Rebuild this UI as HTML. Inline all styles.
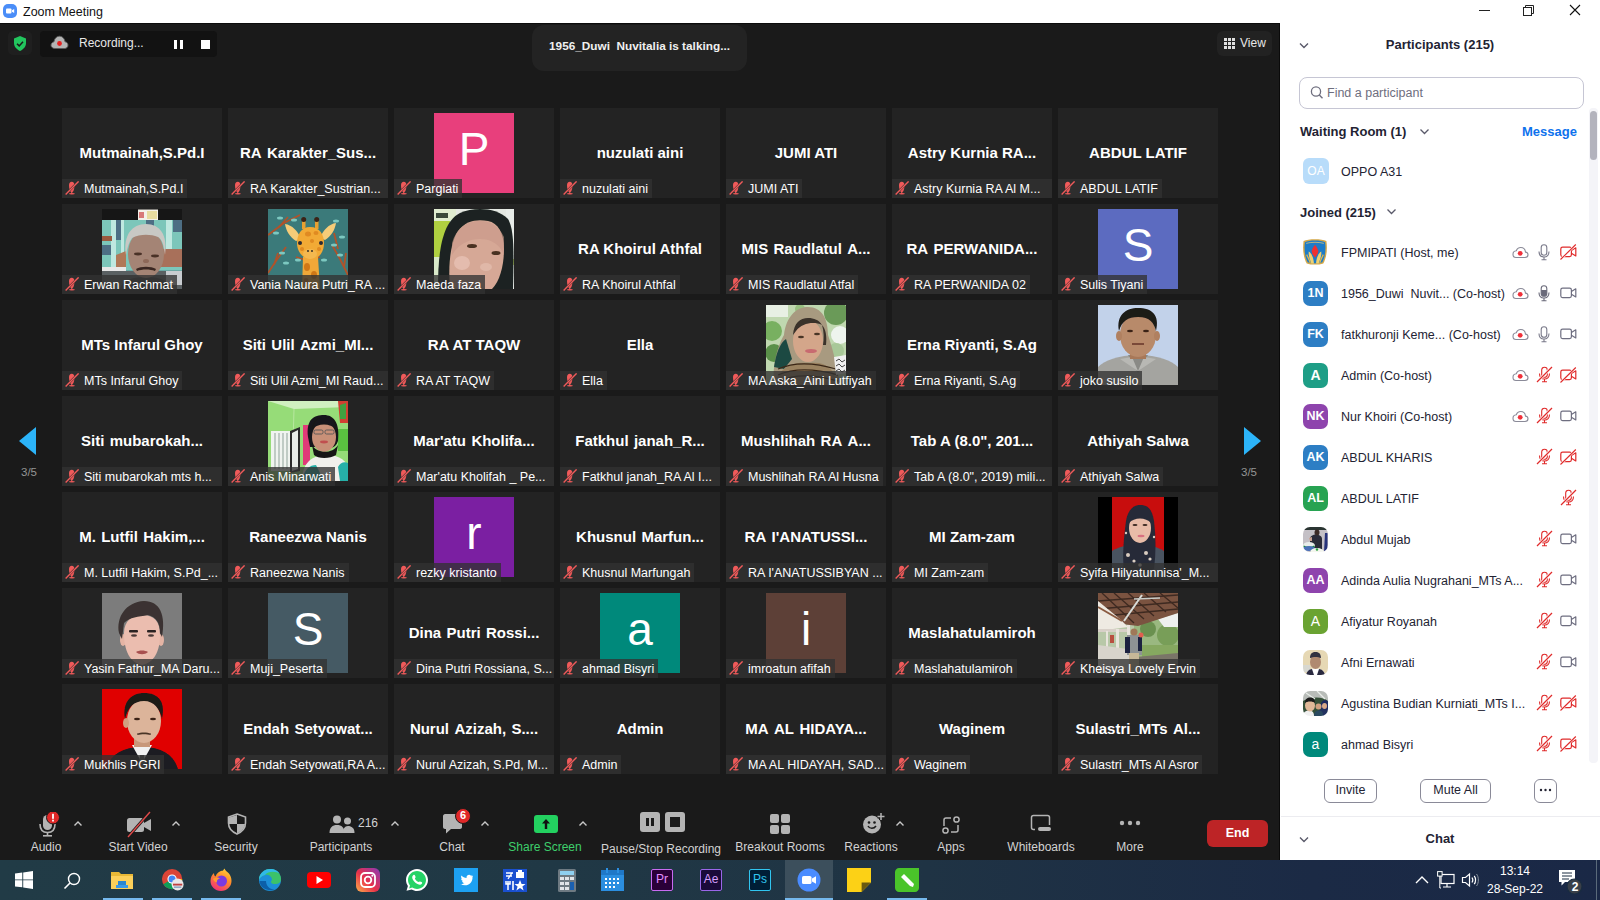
<!DOCTYPE html><html><head><meta charset="utf-8"><style>
*{margin:0;padding:0;box-sizing:border-box}
html,body{width:1600px;height:900px;overflow:hidden;background:#1a1a1a;font-family:"Liberation Sans",sans-serif}
.a{position:absolute}
.t{position:absolute;white-space:nowrap;line-height:1}
.tile{position:absolute;width:160px;height:90px;background:#232323;overflow:hidden}
.big{position:absolute;left:0;width:160px;top:37px;text-align:center;color:#fff;font-weight:bold;font-size:15px;line-height:16px;white-space:nowrap}
.lab{position:absolute;left:0;top:71px;height:19px;background:rgba(50,50,50,0.78);color:#fff;font-size:12.5px;line-height:20px;white-space:nowrap;padding-left:22px;padding-right:4px;max-width:160px;overflow:hidden}
.lab svg{position:absolute;left:3px;top:2px}
.av{position:absolute;left:40px;top:5px;width:80px;height:80px;overflow:hidden;color:#fff;text-align:center;font-size:46px;line-height:73px}
.tb{position:absolute;color:#d2d2d2;font-size:12px;line-height:1;white-space:nowrap;text-align:center}
.prow{position:absolute;left:1280px;width:310px;height:41px}
.pav{position:absolute;left:23px;top:8px;width:25px;height:25px;border-radius:7px;color:#fff;font-weight:bold;font-size:12px;line-height:25px;text-align:center;overflow:hidden}
.pname{position:absolute;left:61px;top:14px;font-size:12.5px;line-height:15px;color:#232333;white-space:nowrap}
.pic{position:absolute;top:11px}
.tk{position:absolute;top:868px;width:24px;height:24px}
</style></head><body>
<div class="a" style="left:0;top:0;width:1600px;height:23px;background:#fff"></div><div class="a" style="left:3px;top:4px;width:14px;height:14px;border-radius:5px;background:#4a8df8"></div><svg class="a" style="left:3px;top:4px" width="14" height="14" viewBox="0 0 14 14"><rect x="3" y="4.5" width="5.5" height="5" rx="1" fill="#fff"/><path d="M9 6.2 L11.2 5 V9 L9 7.8Z" fill="#fff"/></svg><div class="t" style="left:23px;top:6px;font-size:12.5px;color:#111">Zoom Meeting</div><div class="a" style="left:1479px;top:10px;width:11px;height:1px;background:#222"></div><svg class="a" style="left:1522px;top:4px" width="13" height="13" viewBox="0 0 13 13"><rect x="1.5" y="3.5" width="8" height="8" fill="none" stroke="#222"/><path d="M3.5 3.5 V1.5 H11.5 V9.5 H9.5" fill="none" stroke="#222"/></svg><svg class="a" style="left:1569px;top:4px" width="12" height="12" viewBox="0 0 12 12"><path d="M1 1 L11 11 M11 1 L1 11" stroke="#111" stroke-width="1.1"/></svg><div class="a" style="left:8px;top:31px;width:24px;height:24px;border-radius:5px;background:#1f1f1f"></div><svg class="a" style="left:12px;top:35px" width="16" height="17" viewBox="0 0 16 17"><path d="M8 1 L14 3.5 V8 C14 12 11 14.5 8 16 C5 14.5 2 12 2 8 V3.5Z" fill="#22c55e"/><path d="M5 8.7 L7.2 10.9 L11 6.7" fill="none" stroke="#1a1a1a" stroke-width="1.5"/></svg><div class="a" style="left:40px;top:31px;width:177px;height:26px;border-radius:4px;background:#121212"></div><svg class="a" style="left:50px;top:35px" width="19" height="15" viewBox="0 0 19 15"><path d="M5 13.5 H14.5 C16.7 13.5 18 12.1 18 10.1 C18 8.3 16.7 7 15 6.8 C14.7 3.7 12.5 1.2 9.5 1.2 C6.5 1.2 4.3 3.7 4 6.8 C2.3 7.1 1 8.5 1 10.3 C1 12.1 2.7 13.5 5 13.5Z" fill="#b4b4b4" stroke="#5a5a5a" stroke-width="0.9"/><circle cx="9.5" cy="8.5" r="2.4" fill="#e82020"/></svg><div class="t" style="left:79px;top:37px;font-size:12px;color:#e8e8e8">Recording...</div><div class="a" style="left:174px;top:40px;width:3px;height:9px;background:#fff"></div><div class="a" style="left:180px;top:40px;width:3px;height:9px;background:#fff"></div><div class="a" style="left:201px;top:40px;width:9px;height:9px;background:#fff"></div><div class="a" style="left:532px;top:25px;width:215px;height:46px;border-radius:12px;background:#232323"></div><div class="t" style="left:532px;width:215px;top:41px;text-align:center;font-size:11.8px;font-weight:bold;color:#f0f0f0">1956_Duwi&nbsp; Nuvitalia is talking...</div><div class="a" style="left:1217px;top:31px;width:55px;height:25px;border-radius:6px;background:#222"></div><svg class="a" style="left:1224px;top:38px" width="11" height="11" viewBox="0 0 11 11" fill="#e0e0e0"><rect x="0" y="0" width="3" height="3"/><rect x="4" y="0" width="3" height="3"/><rect x="8" y="0" width="3" height="3"/><rect x="0" y="4" width="3" height="3"/><rect x="4" y="4" width="3" height="3"/><rect x="8" y="4" width="3" height="3"/><rect x="0" y="8" width="3" height="3"/><rect x="4" y="8" width="3" height="3"/><rect x="8" y="8" width="3" height="3"/></svg><div class="t" style="left:1240px;top:37px;font-size:12px;color:#e8e8e8">View</div><svg class="a" style="left:18px;top:426px" width="20" height="30" viewBox="0 0 20 30"><path d="M18 1 V29 L1 15Z" fill="#2cb4f9"/></svg><div class="t" style="left:21px;top:467px;font-size:11.5px;color:#959595">3/5</div><svg class="a" style="left:1242px;top:426px" width="20" height="30" viewBox="0 0 20 30"><path d="M2 1 V29 L19 15Z" fill="#2cb4f9"/></svg><div class="t" style="left:1241px;top:467px;font-size:11.5px;color:#959595">3/5</div><div class="tile" style="left:62px;top:108px"><div class="big">Mutmainah,S.Pd.I</div><div class="lab"><svg width="14" height="14" viewBox="0 0 14 14"><path d="M6.75 0.8 C8.4 0.8 9.5 2.2 9.5 4.2 C9.5 6 9.2 7.4 8.9 8.6 C8.6 10.2 7.9 11.2 6.75 11.2 C5.6 11.2 4.9 10.2 4.6 8.6 C4.3 7.4 4 6 4 4.2 C4 2.2 5.1 0.8 6.75 0.8Z" fill="#f05a5a"/><rect x="6.2" y="11" width="1.1" height="1.3" fill="#f05a5a"/><ellipse cx="6.9" cy="12.7" rx="3" ry="0.8" fill="#f05a5a"/><path d="M0.6 13.4 L13.6 0.4" stroke="#2e2e2e" stroke-width="2.2"/><path d="M0.6 13.4 L13.6 0.4" stroke="#f05a5a" stroke-width="1.4"/></svg>Mutmainah,S.Pd.I</div></div><div class="tile" style="left:228px;top:108px"><div class="big">RA<span style="word-spacing:-1.5px">&nbsp; </span>Karakter_Sus...</div><div class="lab" style="width:160px"><svg width="14" height="14" viewBox="0 0 14 14"><path d="M6.75 0.8 C8.4 0.8 9.5 2.2 9.5 4.2 C9.5 6 9.2 7.4 8.9 8.6 C8.6 10.2 7.9 11.2 6.75 11.2 C5.6 11.2 4.9 10.2 4.6 8.6 C4.3 7.4 4 6 4 4.2 C4 2.2 5.1 0.8 6.75 0.8Z" fill="#f05a5a"/><rect x="6.2" y="11" width="1.1" height="1.3" fill="#f05a5a"/><ellipse cx="6.9" cy="12.7" rx="3" ry="0.8" fill="#f05a5a"/><path d="M0.6 13.4 L13.6 0.4" stroke="#2e2e2e" stroke-width="2.2"/><path d="M0.6 13.4 L13.6 0.4" stroke="#f05a5a" stroke-width="1.4"/></svg>RA Karakter_Sustrian...</div></div><div class="tile" style="left:394px;top:108px"><div class="av" style="background:#e83f7c">P</div><div class="lab"><svg width="14" height="14" viewBox="0 0 14 14"><path d="M6.75 0.8 C8.4 0.8 9.5 2.2 9.5 4.2 C9.5 6 9.2 7.4 8.9 8.6 C8.6 10.2 7.9 11.2 6.75 11.2 C5.6 11.2 4.9 10.2 4.6 8.6 C4.3 7.4 4 6 4 4.2 C4 2.2 5.1 0.8 6.75 0.8Z" fill="#f05a5a"/><rect x="6.2" y="11" width="1.1" height="1.3" fill="#f05a5a"/><ellipse cx="6.9" cy="12.7" rx="3" ry="0.8" fill="#f05a5a"/><path d="M0.6 13.4 L13.6 0.4" stroke="#2e2e2e" stroke-width="2.2"/><path d="M0.6 13.4 L13.6 0.4" stroke="#f05a5a" stroke-width="1.4"/></svg>Pargiati</div></div><div class="tile" style="left:560px;top:108px"><div class="big">nuzulati aini</div><div class="lab"><svg width="14" height="14" viewBox="0 0 14 14"><path d="M6.75 0.8 C8.4 0.8 9.5 2.2 9.5 4.2 C9.5 6 9.2 7.4 8.9 8.6 C8.6 10.2 7.9 11.2 6.75 11.2 C5.6 11.2 4.9 10.2 4.6 8.6 C4.3 7.4 4 6 4 4.2 C4 2.2 5.1 0.8 6.75 0.8Z" fill="#f05a5a"/><rect x="6.2" y="11" width="1.1" height="1.3" fill="#f05a5a"/><ellipse cx="6.9" cy="12.7" rx="3" ry="0.8" fill="#f05a5a"/><path d="M0.6 13.4 L13.6 0.4" stroke="#2e2e2e" stroke-width="2.2"/><path d="M0.6 13.4 L13.6 0.4" stroke="#f05a5a" stroke-width="1.4"/></svg>nuzulati aini</div></div><div class="tile" style="left:726px;top:108px"><div class="big">JUMI ATI</div><div class="lab"><svg width="14" height="14" viewBox="0 0 14 14"><path d="M6.75 0.8 C8.4 0.8 9.5 2.2 9.5 4.2 C9.5 6 9.2 7.4 8.9 8.6 C8.6 10.2 7.9 11.2 6.75 11.2 C5.6 11.2 4.9 10.2 4.6 8.6 C4.3 7.4 4 6 4 4.2 C4 2.2 5.1 0.8 6.75 0.8Z" fill="#f05a5a"/><rect x="6.2" y="11" width="1.1" height="1.3" fill="#f05a5a"/><ellipse cx="6.9" cy="12.7" rx="3" ry="0.8" fill="#f05a5a"/><path d="M0.6 13.4 L13.6 0.4" stroke="#2e2e2e" stroke-width="2.2"/><path d="M0.6 13.4 L13.6 0.4" stroke="#f05a5a" stroke-width="1.4"/></svg>JUMI ATI</div></div><div class="tile" style="left:892px;top:108px"><div class="big">Astry Kurnia RA...</div><div class="lab" style="width:160px"><svg width="14" height="14" viewBox="0 0 14 14"><path d="M6.75 0.8 C8.4 0.8 9.5 2.2 9.5 4.2 C9.5 6 9.2 7.4 8.9 8.6 C8.6 10.2 7.9 11.2 6.75 11.2 C5.6 11.2 4.9 10.2 4.6 8.6 C4.3 7.4 4 6 4 4.2 C4 2.2 5.1 0.8 6.75 0.8Z" fill="#f05a5a"/><rect x="6.2" y="11" width="1.1" height="1.3" fill="#f05a5a"/><ellipse cx="6.9" cy="12.7" rx="3" ry="0.8" fill="#f05a5a"/><path d="M0.6 13.4 L13.6 0.4" stroke="#2e2e2e" stroke-width="2.2"/><path d="M0.6 13.4 L13.6 0.4" stroke="#f05a5a" stroke-width="1.4"/></svg>Astry Kurnia RA Al M...</div></div><div class="tile" style="left:1058px;top:108px"><div class="big">ABDUL LATIF</div><div class="lab"><svg width="14" height="14" viewBox="0 0 14 14"><path d="M6.75 0.8 C8.4 0.8 9.5 2.2 9.5 4.2 C9.5 6 9.2 7.4 8.9 8.6 C8.6 10.2 7.9 11.2 6.75 11.2 C5.6 11.2 4.9 10.2 4.6 8.6 C4.3 7.4 4 6 4 4.2 C4 2.2 5.1 0.8 6.75 0.8Z" fill="#f05a5a"/><rect x="6.2" y="11" width="1.1" height="1.3" fill="#f05a5a"/><ellipse cx="6.9" cy="12.7" rx="3" ry="0.8" fill="#f05a5a"/><path d="M0.6 13.4 L13.6 0.4" stroke="#2e2e2e" stroke-width="2.2"/><path d="M0.6 13.4 L13.6 0.4" stroke="#f05a5a" stroke-width="1.4"/></svg>ABDUL LATIF</div></div><div class="tile" style="left:62px;top:204px"><div class="av"><svg width="80" height="80" viewBox="0 0 80 80"><defs><filter id="berwan" x="0" y="0" width="1" height="1"><feGaussianBlur stdDeviation="0.7"/></filter></defs><g filter="url(#berwan)"><rect width="80" height="80" fill="#6aa8a4"/>
<rect x="0" y="11" width="80" height="50" fill="#7cc6ba"/>
<g fill="#bfe8e0"><rect x="9" y="11" width="5" height="52"/><rect x="19" y="11" width="3" height="52"/><rect x="64" y="11" width="6" height="30"/></g>
<g fill="#4e6e84"><rect x="14" y="11" width="5" height="20"/><rect x="44" y="11" width="8" height="12"/><rect x="71" y="11" width="9" height="12"/><rect x="0" y="36" width="9" height="10"/></g>
<rect x="0" y="27" width="10" height="5" fill="#9a5a40"/><path d="M58 40 H80 V58 H58Z" fill="#a8705a"/><path d="M14 46 L24 42 V58 H14Z" fill="#b07858"/><rect x="0" y="58" width="24" height="5" fill="#e8e8e8"/>
<rect x="0" y="62" width="80" height="18" fill="#5a6062"/><rect x="64" y="62" width="16" height="14" fill="#c8ccd0"/>
<rect width="80" height="11" fill="#121212"/><rect x="36" y="0.5" width="20" height="10.5" fill="#f4f0e8"/><rect x="45" y="2" width="10" height="8" fill="#e8dca0"/><rect x="37" y="3" width="5" height="6" fill="#d87878"/>
<path d="M18 80 C20 72 28 68 44 68 C60 68 66 72 68 80Z" fill="#3a3c3c"/>
<ellipse cx="44" cy="45" rx="18" ry="24" fill="#a48474"/>
<path d="M24 46 C21 26 30 15 44 15 C58 15 66 26 63 46 C62 36 60 30 56 28 C48 25 38 25 30 29 C27 33 25 39 24 46Z" fill="#c8c8c4"/>
<ellipse cx="36" cy="45" rx="4" ry="1.4" fill="#4a3028"/><ellipse cx="53" cy="47" rx="4" ry="1.4" fill="#4a3028"/><ellipse cx="44" cy="52" rx="3" ry="2" fill="#8e6858"/>
<path d="M34 60 C39 57 49 57 54 60 L53 62 C48 60 40 60 35 62Z" fill="#3a2820"/></g></svg></div><div class="lab"><svg width="14" height="14" viewBox="0 0 14 14"><path d="M6.75 0.8 C8.4 0.8 9.5 2.2 9.5 4.2 C9.5 6 9.2 7.4 8.9 8.6 C8.6 10.2 7.9 11.2 6.75 11.2 C5.6 11.2 4.9 10.2 4.6 8.6 C4.3 7.4 4 6 4 4.2 C4 2.2 5.1 0.8 6.75 0.8Z" fill="#f05a5a"/><rect x="6.2" y="11" width="1.1" height="1.3" fill="#f05a5a"/><ellipse cx="6.9" cy="12.7" rx="3" ry="0.8" fill="#f05a5a"/><path d="M0.6 13.4 L13.6 0.4" stroke="#2e2e2e" stroke-width="2.2"/><path d="M0.6 13.4 L13.6 0.4" stroke="#f05a5a" stroke-width="1.4"/></svg>Erwan Rachmat</div></div><div class="tile" style="left:228px;top:204px"><div class="av"><svg width="80" height="80" viewBox="0 0 80 80"><defs><filter id="bgiraffe" x="0" y="0" width="1" height="1"><feGaussianBlur stdDeviation="0.7"/></filter></defs><g filter="url(#bgiraffe)"><rect width="80" height="80" fill="#3b7a7a"/>
<g stroke="#b0522a" stroke-width="1.8" fill="none"><path d="M0 26 L16 14 L32 6"/><path d="M10 19 L20 8"/><path d="M0 64 L8 52 L18 38"/><path d="M6 56 L10 44"/><path d="M80 66 L72 50 L64 36"/><path d="M76 58 L78 44"/><path d="M70 40 L66 24"/><path d="M28 48 L40 52 L52 48"/></g>
<g fill="#7cc8c0"><ellipse cx="12" cy="9" rx="3" ry="1.5"/><ellipse cx="26" cy="11" rx="3" ry="1.5"/><ellipse cx="8" cy="24" rx="3" ry="1.5"/><ellipse cx="14" cy="44" rx="3" ry="1.5"/><ellipse cx="18" cy="54" rx="3" ry="1.5"/><ellipse cx="68" cy="12" rx="3" ry="1.5"/><ellipse cx="74" cy="28" rx="3" ry="1.5"/><ellipse cx="66" cy="36" rx="3" ry="1.5"/><ellipse cx="72" cy="46" rx="3" ry="1.5"/><ellipse cx="30" cy="51" rx="3" ry="1.5"/><ellipse cx="56" cy="51" rx="3" ry="1.5"/></g>
<path d="M35 48 H50 L52 80 H34Z" fill="#f0a838"/><g fill="#d07818"><ellipse cx="39" cy="58" rx="3" ry="4"/><ellipse cx="46" cy="66" rx="3" ry="4"/><ellipse cx="38" cy="72" rx="2.5" ry="3"/></g>
<path d="M17 15 C24 16 30 22 33 30 L28 32 C22 28 18 22 17 15Z" fill="#f6cc78"/><path d="M68 14 C61 15 55 21 52 29 L57 31 C63 27 67 21 68 14Z" fill="#f6cc78"/>
<rect x="34" y="10" width="3.5" height="10" fill="#e8a030"/><rect x="47" y="10" width="3.5" height="10" fill="#e8a030"/><circle cx="35.7" cy="10.5" r="2.5" fill="#3a2418"/><circle cx="48.7" cy="10.5" r="2.5" fill="#3a2418"/>
<path d="M42 18 C52 18 56 26 56 34 C56 42 52 50 43 50 C34 50 29 42 29 34 C29 26 33 18 42 18Z" fill="#f2aa36"/>
<g fill="#e08a20"><ellipse cx="40" cy="25" rx="3" ry="2.5"/><ellipse cx="48" cy="24" rx="2.5" ry="2"/><ellipse cx="44" cy="32" rx="2" ry="2"/><ellipse cx="34" cy="40" rx="2" ry="2"/><ellipse cx="51" cy="40" rx="2" ry="2"/></g>
<ellipse cx="42" cy="45" rx="7" ry="5" fill="#f4b850"/>
<circle cx="32" cy="34" r="2" fill="#2a2a30"/><circle cx="53" cy="34" r="2" fill="#2a2a30"/><circle cx="40" cy="42" r="0.9" fill="#222"/><circle cx="44" cy="42" r="0.9" fill="#222"/></g></svg></div><div class="lab" style="width:160px"><svg width="14" height="14" viewBox="0 0 14 14"><path d="M6.75 0.8 C8.4 0.8 9.5 2.2 9.5 4.2 C9.5 6 9.2 7.4 8.9 8.6 C8.6 10.2 7.9 11.2 6.75 11.2 C5.6 11.2 4.9 10.2 4.6 8.6 C4.3 7.4 4 6 4 4.2 C4 2.2 5.1 0.8 6.75 0.8Z" fill="#f05a5a"/><rect x="6.2" y="11" width="1.1" height="1.3" fill="#f05a5a"/><ellipse cx="6.9" cy="12.7" rx="3" ry="0.8" fill="#f05a5a"/><path d="M0.6 13.4 L13.6 0.4" stroke="#2e2e2e" stroke-width="2.2"/><path d="M0.6 13.4 L13.6 0.4" stroke="#f05a5a" stroke-width="1.4"/></svg>Vania Naura Putri_RA ...</div></div><div class="tile" style="left:394px;top:204px"><div class="av"><svg width="80" height="80" viewBox="0 0 80 80"><defs><filter id="bmaeda" x="0" y="0" width="1" height="1"><feGaussianBlur stdDeviation="0.7"/></filter></defs><g filter="url(#bmaeda)"><rect width="80" height="80" fill="#e4e8e2"/><rect x="0" y="0" width="16" height="80" fill="#b0d040"/><rect x="0" y="0" width="22" height="12" fill="#e0ecd0"/><rect x="2" y="4" width="12" height="5" fill="#3a4a3a"/><rect x="0" y="48" width="10" height="32" fill="#d8e8c8"/><rect x="72" y="0" width="8" height="80" fill="#e8ece8"/><rect x="72" y="50" width="8" height="6" fill="#b8d060"/>
<path d="M4 80 C4 50 6 14 26 4 C40 -2 62 -2 74 10 C80 20 80 40 79 80Z" fill="#1a2420"/>
<path d="M16 80 C14 58 16 34 24 22 C32 11 44 10 54 12 C64 14 70 24 70 40 C70 56 66 72 58 80Z" fill="#d6a896"/>
<path d="M18 46 C24 36 34 30 46 30 C58 30 66 36 70 46 L70 28 C64 16 56 12 46 12 C32 12 22 20 18 34Z" fill="#c89888" opacity="0.6"/>
<ellipse cx="38" cy="37" rx="5" ry="2" fill="#4a3020"/><ellipse cx="62" cy="44" rx="4.5" ry="2" fill="#4a3020"/><ellipse cx="52" cy="58" rx="6" ry="4" fill="#e0b8a8"/><ellipse cx="28" cy="54" rx="8" ry="7" fill="#e4bcae"/></g></svg></div><div class="lab"><svg width="14" height="14" viewBox="0 0 14 14"><path d="M6.75 0.8 C8.4 0.8 9.5 2.2 9.5 4.2 C9.5 6 9.2 7.4 8.9 8.6 C8.6 10.2 7.9 11.2 6.75 11.2 C5.6 11.2 4.9 10.2 4.6 8.6 C4.3 7.4 4 6 4 4.2 C4 2.2 5.1 0.8 6.75 0.8Z" fill="#f05a5a"/><rect x="6.2" y="11" width="1.1" height="1.3" fill="#f05a5a"/><ellipse cx="6.9" cy="12.7" rx="3" ry="0.8" fill="#f05a5a"/><path d="M0.6 13.4 L13.6 0.4" stroke="#2e2e2e" stroke-width="2.2"/><path d="M0.6 13.4 L13.6 0.4" stroke="#f05a5a" stroke-width="1.4"/></svg>Maeda faza</div></div><div class="tile" style="left:560px;top:204px"><div class="big">RA Khoirul Athfal</div><div class="lab"><svg width="14" height="14" viewBox="0 0 14 14"><path d="M6.75 0.8 C8.4 0.8 9.5 2.2 9.5 4.2 C9.5 6 9.2 7.4 8.9 8.6 C8.6 10.2 7.9 11.2 6.75 11.2 C5.6 11.2 4.9 10.2 4.6 8.6 C4.3 7.4 4 6 4 4.2 C4 2.2 5.1 0.8 6.75 0.8Z" fill="#f05a5a"/><rect x="6.2" y="11" width="1.1" height="1.3" fill="#f05a5a"/><ellipse cx="6.9" cy="12.7" rx="3" ry="0.8" fill="#f05a5a"/><path d="M0.6 13.4 L13.6 0.4" stroke="#2e2e2e" stroke-width="2.2"/><path d="M0.6 13.4 L13.6 0.4" stroke="#f05a5a" stroke-width="1.4"/></svg>RA Khoirul Athfal</div></div><div class="tile" style="left:726px;top:204px"><div class="big">MIS<span style="word-spacing:-1.5px">&nbsp; </span>Raudlatul<span style="word-spacing:-1.5px">&nbsp; </span>A...</div><div class="lab"><svg width="14" height="14" viewBox="0 0 14 14"><path d="M6.75 0.8 C8.4 0.8 9.5 2.2 9.5 4.2 C9.5 6 9.2 7.4 8.9 8.6 C8.6 10.2 7.9 11.2 6.75 11.2 C5.6 11.2 4.9 10.2 4.6 8.6 C4.3 7.4 4 6 4 4.2 C4 2.2 5.1 0.8 6.75 0.8Z" fill="#f05a5a"/><rect x="6.2" y="11" width="1.1" height="1.3" fill="#f05a5a"/><ellipse cx="6.9" cy="12.7" rx="3" ry="0.8" fill="#f05a5a"/><path d="M0.6 13.4 L13.6 0.4" stroke="#2e2e2e" stroke-width="2.2"/><path d="M0.6 13.4 L13.6 0.4" stroke="#f05a5a" stroke-width="1.4"/></svg>MIS Raudlatul Atfal</div></div><div class="tile" style="left:892px;top:204px"><div class="big">RA<span style="word-spacing:-1.5px">&nbsp; </span>PERWANIDA...</div><div class="lab"><svg width="14" height="14" viewBox="0 0 14 14"><path d="M6.75 0.8 C8.4 0.8 9.5 2.2 9.5 4.2 C9.5 6 9.2 7.4 8.9 8.6 C8.6 10.2 7.9 11.2 6.75 11.2 C5.6 11.2 4.9 10.2 4.6 8.6 C4.3 7.4 4 6 4 4.2 C4 2.2 5.1 0.8 6.75 0.8Z" fill="#f05a5a"/><rect x="6.2" y="11" width="1.1" height="1.3" fill="#f05a5a"/><ellipse cx="6.9" cy="12.7" rx="3" ry="0.8" fill="#f05a5a"/><path d="M0.6 13.4 L13.6 0.4" stroke="#2e2e2e" stroke-width="2.2"/><path d="M0.6 13.4 L13.6 0.4" stroke="#f05a5a" stroke-width="1.4"/></svg>RA PERWANIDA 02</div></div><div class="tile" style="left:1058px;top:204px"><div class="av" style="background:#5c6bc0">S</div><div class="lab"><svg width="14" height="14" viewBox="0 0 14 14"><path d="M6.75 0.8 C8.4 0.8 9.5 2.2 9.5 4.2 C9.5 6 9.2 7.4 8.9 8.6 C8.6 10.2 7.9 11.2 6.75 11.2 C5.6 11.2 4.9 10.2 4.6 8.6 C4.3 7.4 4 6 4 4.2 C4 2.2 5.1 0.8 6.75 0.8Z" fill="#f05a5a"/><rect x="6.2" y="11" width="1.1" height="1.3" fill="#f05a5a"/><ellipse cx="6.9" cy="12.7" rx="3" ry="0.8" fill="#f05a5a"/><path d="M0.6 13.4 L13.6 0.4" stroke="#2e2e2e" stroke-width="2.2"/><path d="M0.6 13.4 L13.6 0.4" stroke="#f05a5a" stroke-width="1.4"/></svg>Sulis Tiyani</div></div><div class="tile" style="left:62px;top:300px"><div class="big">MTs Infarul Ghoy</div><div class="lab"><svg width="14" height="14" viewBox="0 0 14 14"><path d="M6.75 0.8 C8.4 0.8 9.5 2.2 9.5 4.2 C9.5 6 9.2 7.4 8.9 8.6 C8.6 10.2 7.9 11.2 6.75 11.2 C5.6 11.2 4.9 10.2 4.6 8.6 C4.3 7.4 4 6 4 4.2 C4 2.2 5.1 0.8 6.75 0.8Z" fill="#f05a5a"/><rect x="6.2" y="11" width="1.1" height="1.3" fill="#f05a5a"/><ellipse cx="6.9" cy="12.7" rx="3" ry="0.8" fill="#f05a5a"/><path d="M0.6 13.4 L13.6 0.4" stroke="#2e2e2e" stroke-width="2.2"/><path d="M0.6 13.4 L13.6 0.4" stroke="#f05a5a" stroke-width="1.4"/></svg>MTs Infarul Ghoy</div></div><div class="tile" style="left:228px;top:300px"><div class="big">Siti<span style="word-spacing:-1.5px">&nbsp; </span>Ulil<span style="word-spacing:-1.5px">&nbsp; </span>Azmi_MI...</div><div class="lab" style="width:160px"><svg width="14" height="14" viewBox="0 0 14 14"><path d="M6.75 0.8 C8.4 0.8 9.5 2.2 9.5 4.2 C9.5 6 9.2 7.4 8.9 8.6 C8.6 10.2 7.9 11.2 6.75 11.2 C5.6 11.2 4.9 10.2 4.6 8.6 C4.3 7.4 4 6 4 4.2 C4 2.2 5.1 0.8 6.75 0.8Z" fill="#f05a5a"/><rect x="6.2" y="11" width="1.1" height="1.3" fill="#f05a5a"/><ellipse cx="6.9" cy="12.7" rx="3" ry="0.8" fill="#f05a5a"/><path d="M0.6 13.4 L13.6 0.4" stroke="#2e2e2e" stroke-width="2.2"/><path d="M0.6 13.4 L13.6 0.4" stroke="#f05a5a" stroke-width="1.4"/></svg>Siti Ulil Azmi_MI Raud...</div></div><div class="tile" style="left:394px;top:300px"><div class="big">RA AT TAQW</div><div class="lab"><svg width="14" height="14" viewBox="0 0 14 14"><path d="M6.75 0.8 C8.4 0.8 9.5 2.2 9.5 4.2 C9.5 6 9.2 7.4 8.9 8.6 C8.6 10.2 7.9 11.2 6.75 11.2 C5.6 11.2 4.9 10.2 4.6 8.6 C4.3 7.4 4 6 4 4.2 C4 2.2 5.1 0.8 6.75 0.8Z" fill="#f05a5a"/><rect x="6.2" y="11" width="1.1" height="1.3" fill="#f05a5a"/><ellipse cx="6.9" cy="12.7" rx="3" ry="0.8" fill="#f05a5a"/><path d="M0.6 13.4 L13.6 0.4" stroke="#2e2e2e" stroke-width="2.2"/><path d="M0.6 13.4 L13.6 0.4" stroke="#f05a5a" stroke-width="1.4"/></svg>RA AT TAQW</div></div><div class="tile" style="left:560px;top:300px"><div class="big">Ella</div><div class="lab"><svg width="14" height="14" viewBox="0 0 14 14"><path d="M6.75 0.8 C8.4 0.8 9.5 2.2 9.5 4.2 C9.5 6 9.2 7.4 8.9 8.6 C8.6 10.2 7.9 11.2 6.75 11.2 C5.6 11.2 4.9 10.2 4.6 8.6 C4.3 7.4 4 6 4 4.2 C4 2.2 5.1 0.8 6.75 0.8Z" fill="#f05a5a"/><rect x="6.2" y="11" width="1.1" height="1.3" fill="#f05a5a"/><ellipse cx="6.9" cy="12.7" rx="3" ry="0.8" fill="#f05a5a"/><path d="M0.6 13.4 L13.6 0.4" stroke="#2e2e2e" stroke-width="2.2"/><path d="M0.6 13.4 L13.6 0.4" stroke="#f05a5a" stroke-width="1.4"/></svg>Ella</div></div><div class="tile" style="left:726px;top:300px"><div class="av"><svg width="80" height="80" viewBox="0 0 80 80"><defs><filter id="baska" x="0" y="0" width="1" height="1"><feGaussianBlur stdDeviation="0.7"/></filter></defs><g filter="url(#baska)"><rect width="80" height="80" fill="#c0d8b0"/><circle cx="6" cy="26" r="10" fill="#78b060"/><circle cx="8" cy="48" r="9" fill="#5a9048"/><circle cx="70" cy="8" r="12" fill="#6a9a58"/><circle cx="74" cy="30" r="9" fill="#eef4ee"/><circle cx="70" cy="46" r="8" fill="#a8c898"/><rect x="0" y="0" width="22" height="12" fill="#e8f0e4"/><circle cx="34" cy="4" r="5" fill="#98c080"/>
<path d="M8 80 C6 60 12 40 18 30 C20 12 30 2 42 2 C56 2 62 14 62 30 C66 42 70 56 74 80Z" fill="#a89a80"/>
<path d="M8 62 C10 48 14 38 20 34 L26 54 L18 64Z" fill="#1e4a42"/>
<ellipse cx="42" cy="36" rx="15" ry="21" fill="#d4a68a"/><path d="M27 30 C28 18 34 13 42 13 C48 13 53 15 56 20 C48 16 36 18 30 26Z" fill="#3a302a"/><path d="M56 20 C58 26 58 34 57 40 L60 40 C61 32 60 24 56 20Z" fill="#3a302a"/>
<ellipse cx="35" cy="32" rx="3" ry="1.2" fill="#4a3428"/><ellipse cx="51" cy="29" rx="3" ry="1.2" fill="#4a3428"/><ellipse cx="45" cy="46" rx="6" ry="2" fill="#c86a70"/>
<path d="M10 80 C12 64 24 56 44 58 C58 56 68 62 72 80Z" fill="#9a8260"/><g stroke="#3a2818" stroke-width="1.3" fill="none"><path d="M12 64 C30 56 50 58 70 64"/><path d="M12 70 C30 62 50 64 72 70"/><path d="M14 76 C30 68 50 70 72 76"/></g>
<path d="M68 52 L80 50 V68 L70 70Z" fill="#f0f0f0"/><path d="M70 56 L73 54 L76 57 L79 55 M70 61 L73 59 L76 62 L79 60 M70 66 L73 64 L76 67 L79 65" stroke="#444" stroke-width="1" fill="none"/></g></svg></div><div class="lab"><svg width="14" height="14" viewBox="0 0 14 14"><path d="M6.75 0.8 C8.4 0.8 9.5 2.2 9.5 4.2 C9.5 6 9.2 7.4 8.9 8.6 C8.6 10.2 7.9 11.2 6.75 11.2 C5.6 11.2 4.9 10.2 4.6 8.6 C4.3 7.4 4 6 4 4.2 C4 2.2 5.1 0.8 6.75 0.8Z" fill="#f05a5a"/><rect x="6.2" y="11" width="1.1" height="1.3" fill="#f05a5a"/><ellipse cx="6.9" cy="12.7" rx="3" ry="0.8" fill="#f05a5a"/><path d="M0.6 13.4 L13.6 0.4" stroke="#2e2e2e" stroke-width="2.2"/><path d="M0.6 13.4 L13.6 0.4" stroke="#f05a5a" stroke-width="1.4"/></svg>MA Aska_Aini Lutfiyah</div></div><div class="tile" style="left:892px;top:300px"><div class="big">Erna Riyanti, S.Ag</div><div class="lab"><svg width="14" height="14" viewBox="0 0 14 14"><path d="M6.75 0.8 C8.4 0.8 9.5 2.2 9.5 4.2 C9.5 6 9.2 7.4 8.9 8.6 C8.6 10.2 7.9 11.2 6.75 11.2 C5.6 11.2 4.9 10.2 4.6 8.6 C4.3 7.4 4 6 4 4.2 C4 2.2 5.1 0.8 6.75 0.8Z" fill="#f05a5a"/><rect x="6.2" y="11" width="1.1" height="1.3" fill="#f05a5a"/><ellipse cx="6.9" cy="12.7" rx="3" ry="0.8" fill="#f05a5a"/><path d="M0.6 13.4 L13.6 0.4" stroke="#2e2e2e" stroke-width="2.2"/><path d="M0.6 13.4 L13.6 0.4" stroke="#f05a5a" stroke-width="1.4"/></svg>Erna Riyanti, S.Ag</div></div><div class="tile" style="left:1058px;top:300px"><div class="av"><svg width="80" height="80" viewBox="0 0 80 80"><defs><filter id="bjoko" x="0" y="0" width="1" height="1"><feGaussianBlur stdDeviation="0.7"/></filter></defs><g filter="url(#bjoko)"><rect width="80" height="80" fill="#c2d2ea"/>
<path d="M0 80 V62 C6 56 20 50 40 50 C60 50 74 56 80 62 V80Z" fill="#a4a4a0"/><path d="M30 50 L40 68 L50 50Z" fill="#8a8a86"/><path d="M22 54 L34 52 L40 66 Z M58 54 L46 52 L40 66Z" fill="#b8b8b4"/>
<rect x="32" y="40" width="16" height="14" fill="#a87858"/>
<ellipse cx="40" cy="30" rx="18" ry="22" fill="#b88a6a"/><ellipse cx="21" cy="31" rx="3" ry="5" fill="#b08060"/><ellipse cx="59" cy="31" rx="3" ry="5" fill="#b08060"/>
<path d="M21 26 C18 10 28 3 40 3 C54 3 62 10 58 26 C56 18 52 12 40 12 C30 12 24 16 21 26Z" fill="#1e1a18"/>
<ellipse cx="32" cy="26" rx="3" ry="1.2" fill="#3a2418"/><ellipse cx="48" cy="26" rx="3" ry="1.2" fill="#3a2418"/><rect x="34" y="38" width="12" height="2" fill="#7a4a38"/></g></svg></div><div class="lab"><svg width="14" height="14" viewBox="0 0 14 14"><path d="M6.75 0.8 C8.4 0.8 9.5 2.2 9.5 4.2 C9.5 6 9.2 7.4 8.9 8.6 C8.6 10.2 7.9 11.2 6.75 11.2 C5.6 11.2 4.9 10.2 4.6 8.6 C4.3 7.4 4 6 4 4.2 C4 2.2 5.1 0.8 6.75 0.8Z" fill="#f05a5a"/><rect x="6.2" y="11" width="1.1" height="1.3" fill="#f05a5a"/><ellipse cx="6.9" cy="12.7" rx="3" ry="0.8" fill="#f05a5a"/><path d="M0.6 13.4 L13.6 0.4" stroke="#2e2e2e" stroke-width="2.2"/><path d="M0.6 13.4 L13.6 0.4" stroke="#f05a5a" stroke-width="1.4"/></svg>joko susilo</div></div><div class="tile" style="left:62px;top:396px"><div class="big">Siti<span style="word-spacing:-1.5px">&nbsp; </span>mubarokah...</div><div class="lab" style="width:160px"><svg width="14" height="14" viewBox="0 0 14 14"><path d="M6.75 0.8 C8.4 0.8 9.5 2.2 9.5 4.2 C9.5 6 9.2 7.4 8.9 8.6 C8.6 10.2 7.9 11.2 6.75 11.2 C5.6 11.2 4.9 10.2 4.6 8.6 C4.3 7.4 4 6 4 4.2 C4 2.2 5.1 0.8 6.75 0.8Z" fill="#f05a5a"/><rect x="6.2" y="11" width="1.1" height="1.3" fill="#f05a5a"/><ellipse cx="6.9" cy="12.7" rx="3" ry="0.8" fill="#f05a5a"/><path d="M0.6 13.4 L13.6 0.4" stroke="#2e2e2e" stroke-width="2.2"/><path d="M0.6 13.4 L13.6 0.4" stroke="#f05a5a" stroke-width="1.4"/></svg>Siti mubarokah mts h...</div></div><div class="tile" style="left:228px;top:396px"><div class="av"><svg width="80" height="80" viewBox="0 0 80 80"><defs><filter id="banis" x="0" y="0" width="1" height="1"><feGaussianBlur stdDeviation="0.7"/></filter></defs><g filter="url(#banis)"><rect width="80" height="80" fill="#96dc78"/><path d="M0 0 H80 V6 L26 8 L0 0Z" fill="#d0f0c0"/><path d="M26 8 L24 80" stroke="#b8e8a0" stroke-width="1"/>
<rect x="3" y="30" width="20" height="40" fill="#f0f4f0"/><g stroke="#a0b0a8" stroke-width="1.2"><path d="M7 32 V68 M11 32 V68 M15 32 V68 M19 32 V68"/></g><path d="M22 30 L32 26 V70 L22 72Z" fill="#2a2a2a"/><path d="M24 32 L30 29 V68 L24 70Z" fill="#e8ece8"/>
<rect x="35" y="24" width="7" height="40" fill="#e03a78"/><path d="M70 0 H80 V22 L72 22Z" fill="#d04030"/><path d="M72 4 L78 2 V18 L72 18Z" fill="#40a040"/><rect x="70" y="28" width="10" height="22" fill="#5ac040"/>
<path d="M34 80 C34 62 44 54 58 54 C72 54 80 60 80 70 V80Z" fill="#f0f0ec"/><path d="M34 80 C36 68 42 64 48 64 L56 80Z M80 62 C76 60 72 62 70 66 L72 80 H80Z" fill="#28b0a8"/>
<path d="M40 36 C38 18 46 14 56 14 C66 14 72 22 70 40 C68 46 64 48 60 46 L42 46Z" fill="#18181a"/>
<ellipse cx="56" cy="36" rx="12" ry="15" fill="#c89078"/><path d="M44 28 C46 18 52 16 57 16 C64 16 68 20 68 28 C62 22 50 22 44 28Z" fill="#18181a"/>
<rect x="46" y="29" width="9" height="4" rx="1.5" fill="none" stroke="#555" stroke-width="0.9"/><rect x="57" y="29" width="9" height="4" rx="1.5" fill="none" stroke="#555" stroke-width="0.9"/><ellipse cx="56" cy="41" rx="4" ry="1.4" fill="#c05050"/>
<path d="M44 44 C48 52 64 54 70 44 L68 54 C62 58 50 58 46 54Z" fill="#141414"/></g></svg></div><div class="lab"><svg width="14" height="14" viewBox="0 0 14 14"><path d="M6.75 0.8 C8.4 0.8 9.5 2.2 9.5 4.2 C9.5 6 9.2 7.4 8.9 8.6 C8.6 10.2 7.9 11.2 6.75 11.2 C5.6 11.2 4.9 10.2 4.6 8.6 C4.3 7.4 4 6 4 4.2 C4 2.2 5.1 0.8 6.75 0.8Z" fill="#f05a5a"/><rect x="6.2" y="11" width="1.1" height="1.3" fill="#f05a5a"/><ellipse cx="6.9" cy="12.7" rx="3" ry="0.8" fill="#f05a5a"/><path d="M0.6 13.4 L13.6 0.4" stroke="#2e2e2e" stroke-width="2.2"/><path d="M0.6 13.4 L13.6 0.4" stroke="#f05a5a" stroke-width="1.4"/></svg>Anis Minarwati</div></div><div class="tile" style="left:394px;top:396px"><div class="big">Mar&#x27;atu<span style="word-spacing:-1.5px">&nbsp; </span>Kholifa...</div><div class="lab" style="width:160px"><svg width="14" height="14" viewBox="0 0 14 14"><path d="M6.75 0.8 C8.4 0.8 9.5 2.2 9.5 4.2 C9.5 6 9.2 7.4 8.9 8.6 C8.6 10.2 7.9 11.2 6.75 11.2 C5.6 11.2 4.9 10.2 4.6 8.6 C4.3 7.4 4 6 4 4.2 C4 2.2 5.1 0.8 6.75 0.8Z" fill="#f05a5a"/><rect x="6.2" y="11" width="1.1" height="1.3" fill="#f05a5a"/><ellipse cx="6.9" cy="12.7" rx="3" ry="0.8" fill="#f05a5a"/><path d="M0.6 13.4 L13.6 0.4" stroke="#2e2e2e" stroke-width="2.2"/><path d="M0.6 13.4 L13.6 0.4" stroke="#f05a5a" stroke-width="1.4"/></svg>Mar&#x27;atu Kholifah _ Pe...</div></div><div class="tile" style="left:560px;top:396px"><div class="big">Fatkhul<span style="word-spacing:-1.5px">&nbsp; </span>janah_R...</div><div class="lab" style="width:160px"><svg width="14" height="14" viewBox="0 0 14 14"><path d="M6.75 0.8 C8.4 0.8 9.5 2.2 9.5 4.2 C9.5 6 9.2 7.4 8.9 8.6 C8.6 10.2 7.9 11.2 6.75 11.2 C5.6 11.2 4.9 10.2 4.6 8.6 C4.3 7.4 4 6 4 4.2 C4 2.2 5.1 0.8 6.75 0.8Z" fill="#f05a5a"/><rect x="6.2" y="11" width="1.1" height="1.3" fill="#f05a5a"/><ellipse cx="6.9" cy="12.7" rx="3" ry="0.8" fill="#f05a5a"/><path d="M0.6 13.4 L13.6 0.4" stroke="#2e2e2e" stroke-width="2.2"/><path d="M0.6 13.4 L13.6 0.4" stroke="#f05a5a" stroke-width="1.4"/></svg>Fatkhul janah_RA Al I...</div></div><div class="tile" style="left:726px;top:396px"><div class="big">Mushlihah<span style="word-spacing:-1.5px">&nbsp; </span>RA<span style="word-spacing:-1.5px">&nbsp; </span>A...</div><div class="lab"><svg width="14" height="14" viewBox="0 0 14 14"><path d="M6.75 0.8 C8.4 0.8 9.5 2.2 9.5 4.2 C9.5 6 9.2 7.4 8.9 8.6 C8.6 10.2 7.9 11.2 6.75 11.2 C5.6 11.2 4.9 10.2 4.6 8.6 C4.3 7.4 4 6 4 4.2 C4 2.2 5.1 0.8 6.75 0.8Z" fill="#f05a5a"/><rect x="6.2" y="11" width="1.1" height="1.3" fill="#f05a5a"/><ellipse cx="6.9" cy="12.7" rx="3" ry="0.8" fill="#f05a5a"/><path d="M0.6 13.4 L13.6 0.4" stroke="#2e2e2e" stroke-width="2.2"/><path d="M0.6 13.4 L13.6 0.4" stroke="#f05a5a" stroke-width="1.4"/></svg>Mushlihah RA Al Husna</div></div><div class="tile" style="left:892px;top:396px"><div class="big">Tab A (8.0&quot;, 201...</div><div class="lab" style="width:160px"><svg width="14" height="14" viewBox="0 0 14 14"><path d="M6.75 0.8 C8.4 0.8 9.5 2.2 9.5 4.2 C9.5 6 9.2 7.4 8.9 8.6 C8.6 10.2 7.9 11.2 6.75 11.2 C5.6 11.2 4.9 10.2 4.6 8.6 C4.3 7.4 4 6 4 4.2 C4 2.2 5.1 0.8 6.75 0.8Z" fill="#f05a5a"/><rect x="6.2" y="11" width="1.1" height="1.3" fill="#f05a5a"/><ellipse cx="6.9" cy="12.7" rx="3" ry="0.8" fill="#f05a5a"/><path d="M0.6 13.4 L13.6 0.4" stroke="#2e2e2e" stroke-width="2.2"/><path d="M0.6 13.4 L13.6 0.4" stroke="#f05a5a" stroke-width="1.4"/></svg>Tab A (8.0&quot;, 2019) mili...</div></div><div class="tile" style="left:1058px;top:396px"><div class="big">Athiyah Salwa</div><div class="lab"><svg width="14" height="14" viewBox="0 0 14 14"><path d="M6.75 0.8 C8.4 0.8 9.5 2.2 9.5 4.2 C9.5 6 9.2 7.4 8.9 8.6 C8.6 10.2 7.9 11.2 6.75 11.2 C5.6 11.2 4.9 10.2 4.6 8.6 C4.3 7.4 4 6 4 4.2 C4 2.2 5.1 0.8 6.75 0.8Z" fill="#f05a5a"/><rect x="6.2" y="11" width="1.1" height="1.3" fill="#f05a5a"/><ellipse cx="6.9" cy="12.7" rx="3" ry="0.8" fill="#f05a5a"/><path d="M0.6 13.4 L13.6 0.4" stroke="#2e2e2e" stroke-width="2.2"/><path d="M0.6 13.4 L13.6 0.4" stroke="#f05a5a" stroke-width="1.4"/></svg>Athiyah Salwa</div></div><div class="tile" style="left:62px;top:492px"><div class="big">M.<span style="word-spacing:-1.5px">&nbsp; </span>Lutfil<span style="word-spacing:-1.5px">&nbsp; </span>Hakim,...</div><div class="lab" style="width:160px"><svg width="14" height="14" viewBox="0 0 14 14"><path d="M6.75 0.8 C8.4 0.8 9.5 2.2 9.5 4.2 C9.5 6 9.2 7.4 8.9 8.6 C8.6 10.2 7.9 11.2 6.75 11.2 C5.6 11.2 4.9 10.2 4.6 8.6 C4.3 7.4 4 6 4 4.2 C4 2.2 5.1 0.8 6.75 0.8Z" fill="#f05a5a"/><rect x="6.2" y="11" width="1.1" height="1.3" fill="#f05a5a"/><ellipse cx="6.9" cy="12.7" rx="3" ry="0.8" fill="#f05a5a"/><path d="M0.6 13.4 L13.6 0.4" stroke="#2e2e2e" stroke-width="2.2"/><path d="M0.6 13.4 L13.6 0.4" stroke="#f05a5a" stroke-width="1.4"/></svg>M. Lutfil Hakim, S.Pd_...</div></div><div class="tile" style="left:228px;top:492px"><div class="big">Raneezwa Nanis</div><div class="lab"><svg width="14" height="14" viewBox="0 0 14 14"><path d="M6.75 0.8 C8.4 0.8 9.5 2.2 9.5 4.2 C9.5 6 9.2 7.4 8.9 8.6 C8.6 10.2 7.9 11.2 6.75 11.2 C5.6 11.2 4.9 10.2 4.6 8.6 C4.3 7.4 4 6 4 4.2 C4 2.2 5.1 0.8 6.75 0.8Z" fill="#f05a5a"/><rect x="6.2" y="11" width="1.1" height="1.3" fill="#f05a5a"/><ellipse cx="6.9" cy="12.7" rx="3" ry="0.8" fill="#f05a5a"/><path d="M0.6 13.4 L13.6 0.4" stroke="#2e2e2e" stroke-width="2.2"/><path d="M0.6 13.4 L13.6 0.4" stroke="#f05a5a" stroke-width="1.4"/></svg>Raneezwa Nanis</div></div><div class="tile" style="left:394px;top:492px"><div class="av" style="background:#7b1fa2">r</div><div class="lab"><svg width="14" height="14" viewBox="0 0 14 14"><path d="M6.75 0.8 C8.4 0.8 9.5 2.2 9.5 4.2 C9.5 6 9.2 7.4 8.9 8.6 C8.6 10.2 7.9 11.2 6.75 11.2 C5.6 11.2 4.9 10.2 4.6 8.6 C4.3 7.4 4 6 4 4.2 C4 2.2 5.1 0.8 6.75 0.8Z" fill="#f05a5a"/><rect x="6.2" y="11" width="1.1" height="1.3" fill="#f05a5a"/><ellipse cx="6.9" cy="12.7" rx="3" ry="0.8" fill="#f05a5a"/><path d="M0.6 13.4 L13.6 0.4" stroke="#2e2e2e" stroke-width="2.2"/><path d="M0.6 13.4 L13.6 0.4" stroke="#f05a5a" stroke-width="1.4"/></svg>rezky kristanto</div></div><div class="tile" style="left:560px;top:492px"><div class="big">Khusnul<span style="word-spacing:-1.5px">&nbsp; </span>Marfun...</div><div class="lab"><svg width="14" height="14" viewBox="0 0 14 14"><path d="M6.75 0.8 C8.4 0.8 9.5 2.2 9.5 4.2 C9.5 6 9.2 7.4 8.9 8.6 C8.6 10.2 7.9 11.2 6.75 11.2 C5.6 11.2 4.9 10.2 4.6 8.6 C4.3 7.4 4 6 4 4.2 C4 2.2 5.1 0.8 6.75 0.8Z" fill="#f05a5a"/><rect x="6.2" y="11" width="1.1" height="1.3" fill="#f05a5a"/><ellipse cx="6.9" cy="12.7" rx="3" ry="0.8" fill="#f05a5a"/><path d="M0.6 13.4 L13.6 0.4" stroke="#2e2e2e" stroke-width="2.2"/><path d="M0.6 13.4 L13.6 0.4" stroke="#f05a5a" stroke-width="1.4"/></svg>Khusnul Marfungah</div></div><div class="tile" style="left:726px;top:492px"><div class="big">RA<span style="word-spacing:-1.5px">&nbsp; </span>I&#x27;ANATUSSI...</div><div class="lab" style="width:160px"><svg width="14" height="14" viewBox="0 0 14 14"><path d="M6.75 0.8 C8.4 0.8 9.5 2.2 9.5 4.2 C9.5 6 9.2 7.4 8.9 8.6 C8.6 10.2 7.9 11.2 6.75 11.2 C5.6 11.2 4.9 10.2 4.6 8.6 C4.3 7.4 4 6 4 4.2 C4 2.2 5.1 0.8 6.75 0.8Z" fill="#f05a5a"/><rect x="6.2" y="11" width="1.1" height="1.3" fill="#f05a5a"/><ellipse cx="6.9" cy="12.7" rx="3" ry="0.8" fill="#f05a5a"/><path d="M0.6 13.4 L13.6 0.4" stroke="#2e2e2e" stroke-width="2.2"/><path d="M0.6 13.4 L13.6 0.4" stroke="#f05a5a" stroke-width="1.4"/></svg>RA I&#x27;ANATUSSIBYAN ...</div></div><div class="tile" style="left:892px;top:492px"><div class="big">MI Zam-zam</div><div class="lab"><svg width="14" height="14" viewBox="0 0 14 14"><path d="M6.75 0.8 C8.4 0.8 9.5 2.2 9.5 4.2 C9.5 6 9.2 7.4 8.9 8.6 C8.6 10.2 7.9 11.2 6.75 11.2 C5.6 11.2 4.9 10.2 4.6 8.6 C4.3 7.4 4 6 4 4.2 C4 2.2 5.1 0.8 6.75 0.8Z" fill="#f05a5a"/><rect x="6.2" y="11" width="1.1" height="1.3" fill="#f05a5a"/><ellipse cx="6.9" cy="12.7" rx="3" ry="0.8" fill="#f05a5a"/><path d="M0.6 13.4 L13.6 0.4" stroke="#2e2e2e" stroke-width="2.2"/><path d="M0.6 13.4 L13.6 0.4" stroke="#f05a5a" stroke-width="1.4"/></svg>MI Zam-zam</div></div><div class="tile" style="left:1058px;top:492px"><div class="av"><svg width="80" height="80" viewBox="0 0 80 80"><defs><filter id="bsyifa" x="0" y="0" width="1" height="1"><feGaussianBlur stdDeviation="0.7"/></filter></defs><g filter="url(#bsyifa)"><rect width="80" height="80" fill="#000"/><rect x="14" y="0" width="52" height="80" fill="#c80c0c"/>
<path d="M14 80 V54 C20 50 28 48 40 48 C52 48 60 50 66 54 V80Z" fill="#4a5260"/>
<path d="M26 76 C24 56 26 40 28 24 C30 12 36 8 42 8 C50 8 54 12 56 24 C58 40 58 56 56 72 C50 76 34 78 26 76Z" fill="#262a38"/>
<ellipse cx="42" cy="31" rx="11" ry="15" fill="#e8bca8"/><path d="M31 26 C32 16 36 13 42 13 C48 13 52 16 53 26 C48 20 36 20 31 26Z" fill="#262a38"/>
<ellipse cx="37" cy="28" rx="2.5" ry="1" fill="#3a2820"/><ellipse cx="47" cy="28" rx="2.5" ry="1" fill="#3a2820"/><ellipse cx="43" cy="39" rx="3.5" ry="1.2" fill="#d87080"/>
<g fill="#d8ccc0"><circle cx="30" cy="58" r="2"/><circle cx="36" cy="64" r="1.6"/><circle cx="48" cy="56" r="2"/><circle cx="52" cy="62" r="1.6"/><circle cx="42" cy="68" r="1.8"/><circle cx="28" cy="36" r="1.2"/><circle cx="56" cy="40" r="1.2"/></g></g></svg></div><div class="lab" style="width:160px"><svg width="14" height="14" viewBox="0 0 14 14"><path d="M6.75 0.8 C8.4 0.8 9.5 2.2 9.5 4.2 C9.5 6 9.2 7.4 8.9 8.6 C8.6 10.2 7.9 11.2 6.75 11.2 C5.6 11.2 4.9 10.2 4.6 8.6 C4.3 7.4 4 6 4 4.2 C4 2.2 5.1 0.8 6.75 0.8Z" fill="#f05a5a"/><rect x="6.2" y="11" width="1.1" height="1.3" fill="#f05a5a"/><ellipse cx="6.9" cy="12.7" rx="3" ry="0.8" fill="#f05a5a"/><path d="M0.6 13.4 L13.6 0.4" stroke="#2e2e2e" stroke-width="2.2"/><path d="M0.6 13.4 L13.6 0.4" stroke="#f05a5a" stroke-width="1.4"/></svg>Syifa Hilyatunnisa&#x27;_M...</div></div><div class="tile" style="left:62px;top:588px"><div class="av"><svg width="80" height="80" viewBox="0 0 80 80"><defs><filter id="byasin" x="0" y="0" width="1" height="1"><feGaussianBlur stdDeviation="0.7"/></filter></defs><g filter="url(#byasin)"><rect width="80" height="80" fill="#7b7b7b"/>
<ellipse cx="21" cy="47" rx="3" ry="6" fill="#e4b4a4"/><ellipse cx="59" cy="47" rx="3" ry="6" fill="#e4b4a4"/>
<path d="M22 40 C22 28 30 22 40 22 C52 22 58 28 58 42 C58 58 52 70 40 72 C28 70 22 58 22 40Z" fill="#ebbdaf"/>
<path d="M17 40 C14 24 24 9 42 8 C58 8 64 22 60 44 L58 40 C58 30 54 24 46 22 C36 24 28 24 22 30 L20 46Z" fill="#3a3230"/>
<rect x="27" y="37" width="9" height="2.5" rx="1" fill="#2a2222"/><rect x="45" y="37" width="9" height="2.5" rx="1" fill="#2a2222"/><ellipse cx="32" cy="42.5" rx="3" ry="1.2" fill="#4a3a38"/><ellipse cx="49" cy="42.5" rx="3" ry="1.2" fill="#4a3a38"/>
<path d="M34 59 C37 57 43 57 46 59 C43 62 37 62 34 59Z" fill="#a85050"/></g></svg></div><div class="lab" style="width:160px"><svg width="14" height="14" viewBox="0 0 14 14"><path d="M6.75 0.8 C8.4 0.8 9.5 2.2 9.5 4.2 C9.5 6 9.2 7.4 8.9 8.6 C8.6 10.2 7.9 11.2 6.75 11.2 C5.6 11.2 4.9 10.2 4.6 8.6 C4.3 7.4 4 6 4 4.2 C4 2.2 5.1 0.8 6.75 0.8Z" fill="#f05a5a"/><rect x="6.2" y="11" width="1.1" height="1.3" fill="#f05a5a"/><ellipse cx="6.9" cy="12.7" rx="3" ry="0.8" fill="#f05a5a"/><path d="M0.6 13.4 L13.6 0.4" stroke="#2e2e2e" stroke-width="2.2"/><path d="M0.6 13.4 L13.6 0.4" stroke="#f05a5a" stroke-width="1.4"/></svg>Yasin Fathur_MA Daru...</div></div><div class="tile" style="left:228px;top:588px"><div class="av" style="background:#455a64">S</div><div class="lab"><svg width="14" height="14" viewBox="0 0 14 14"><path d="M6.75 0.8 C8.4 0.8 9.5 2.2 9.5 4.2 C9.5 6 9.2 7.4 8.9 8.6 C8.6 10.2 7.9 11.2 6.75 11.2 C5.6 11.2 4.9 10.2 4.6 8.6 C4.3 7.4 4 6 4 4.2 C4 2.2 5.1 0.8 6.75 0.8Z" fill="#f05a5a"/><rect x="6.2" y="11" width="1.1" height="1.3" fill="#f05a5a"/><ellipse cx="6.9" cy="12.7" rx="3" ry="0.8" fill="#f05a5a"/><path d="M0.6 13.4 L13.6 0.4" stroke="#2e2e2e" stroke-width="2.2"/><path d="M0.6 13.4 L13.6 0.4" stroke="#f05a5a" stroke-width="1.4"/></svg>Muji_Peserta</div></div><div class="tile" style="left:394px;top:588px"><div class="big">Dina<span style="word-spacing:-1.5px">&nbsp; </span>Putri<span style="word-spacing:-1.5px">&nbsp; </span>Rossi...</div><div class="lab" style="width:160px"><svg width="14" height="14" viewBox="0 0 14 14"><path d="M6.75 0.8 C8.4 0.8 9.5 2.2 9.5 4.2 C9.5 6 9.2 7.4 8.9 8.6 C8.6 10.2 7.9 11.2 6.75 11.2 C5.6 11.2 4.9 10.2 4.6 8.6 C4.3 7.4 4 6 4 4.2 C4 2.2 5.1 0.8 6.75 0.8Z" fill="#f05a5a"/><rect x="6.2" y="11" width="1.1" height="1.3" fill="#f05a5a"/><ellipse cx="6.9" cy="12.7" rx="3" ry="0.8" fill="#f05a5a"/><path d="M0.6 13.4 L13.6 0.4" stroke="#2e2e2e" stroke-width="2.2"/><path d="M0.6 13.4 L13.6 0.4" stroke="#f05a5a" stroke-width="1.4"/></svg>Dina Putri Rossiana, S...</div></div><div class="tile" style="left:560px;top:588px"><div class="av" style="background:#00897b">a</div><div class="lab"><svg width="14" height="14" viewBox="0 0 14 14"><path d="M6.75 0.8 C8.4 0.8 9.5 2.2 9.5 4.2 C9.5 6 9.2 7.4 8.9 8.6 C8.6 10.2 7.9 11.2 6.75 11.2 C5.6 11.2 4.9 10.2 4.6 8.6 C4.3 7.4 4 6 4 4.2 C4 2.2 5.1 0.8 6.75 0.8Z" fill="#f05a5a"/><rect x="6.2" y="11" width="1.1" height="1.3" fill="#f05a5a"/><ellipse cx="6.9" cy="12.7" rx="3" ry="0.8" fill="#f05a5a"/><path d="M0.6 13.4 L13.6 0.4" stroke="#2e2e2e" stroke-width="2.2"/><path d="M0.6 13.4 L13.6 0.4" stroke="#f05a5a" stroke-width="1.4"/></svg>ahmad Bisyri</div></div><div class="tile" style="left:726px;top:588px"><div class="av" style="background:#5d4037">i</div><div class="lab"><svg width="14" height="14" viewBox="0 0 14 14"><path d="M6.75 0.8 C8.4 0.8 9.5 2.2 9.5 4.2 C9.5 6 9.2 7.4 8.9 8.6 C8.6 10.2 7.9 11.2 6.75 11.2 C5.6 11.2 4.9 10.2 4.6 8.6 C4.3 7.4 4 6 4 4.2 C4 2.2 5.1 0.8 6.75 0.8Z" fill="#f05a5a"/><rect x="6.2" y="11" width="1.1" height="1.3" fill="#f05a5a"/><ellipse cx="6.9" cy="12.7" rx="3" ry="0.8" fill="#f05a5a"/><path d="M0.6 13.4 L13.6 0.4" stroke="#2e2e2e" stroke-width="2.2"/><path d="M0.6 13.4 L13.6 0.4" stroke="#f05a5a" stroke-width="1.4"/></svg>imroatun afifah</div></div><div class="tile" style="left:892px;top:588px"><div class="big">Maslahatulamiroh</div><div class="lab"><svg width="14" height="14" viewBox="0 0 14 14"><path d="M6.75 0.8 C8.4 0.8 9.5 2.2 9.5 4.2 C9.5 6 9.2 7.4 8.9 8.6 C8.6 10.2 7.9 11.2 6.75 11.2 C5.6 11.2 4.9 10.2 4.6 8.6 C4.3 7.4 4 6 4 4.2 C4 2.2 5.1 0.8 6.75 0.8Z" fill="#f05a5a"/><rect x="6.2" y="11" width="1.1" height="1.3" fill="#f05a5a"/><ellipse cx="6.9" cy="12.7" rx="3" ry="0.8" fill="#f05a5a"/><path d="M0.6 13.4 L13.6 0.4" stroke="#2e2e2e" stroke-width="2.2"/><path d="M0.6 13.4 L13.6 0.4" stroke="#f05a5a" stroke-width="1.4"/></svg>Maslahatulamiroh</div></div><div class="tile" style="left:1058px;top:588px"><div class="av"><svg width="80" height="80" viewBox="0 0 80 80"><defs><filter id="bkheisya" x="0" y="0" width="1" height="1"><feGaussianBlur stdDeviation="0.7"/></filter></defs><g filter="url(#bkheisya)"><rect width="80" height="80" fill="#b8c8a8"/><rect x="36" y="26" width="44" height="40" fill="#9ab880"/><circle cx="70" cy="42" r="11" fill="#789e58"/><circle cx="50" cy="36" r="8" fill="#6a9050"/><rect x="44" y="52" width="36" height="14" fill="#86a860"/><path d="M60 26 L80 20 V34 L66 34Z" fill="#eef0ee"/>
<path d="M0 0 H80 V20 L40 33 L0 28Z" fill="#7a5240"/><g stroke="#3e2a20" stroke-width="1.3"><path d="M4 0 L36 30 M16 0 L46 26 M30 0 L56 23 M46 0 L68 19 M62 0 L80 15"/><path d="M0 8 L80 2 M0 16 L80 9 M6 23 L80 16"/></g><path d="M44 2 L26 28" stroke="#d8dcd8" stroke-width="2"/><path d="M36 6 L62 5" stroke="#c8ccc8" stroke-width="1.5"/>
<path d="M0 8 L22 26 L30 34 L0 38Z" fill="#eeeae2"/><path d="M0 14 L24 28" stroke="#8a5a40" stroke-width="2"/><rect x="0" y="36" width="30" height="3" fill="#d8d0c8"/>
<g fill="#e8e4dc"><rect x="18" y="36" width="3" height="22"/><rect x="29" y="32" width="3" height="24"/><rect x="8" y="38" width="2" height="18"/></g><rect x="12" y="42" width="4" height="8" fill="#b85040"/>
<path d="M0 52 L30 56 L38 80 H0Z" fill="#d8d4cc"/><path d="M38 64 L80 60 V80 H42Z" fill="#7a7468"/>
<rect x="29" y="42" width="15" height="20" fill="#8e9294"/><rect x="27" y="44" width="5" height="16" fill="#1a2040"/><rect x="40" y="44" width="4" height="14" fill="#1a2040"/><rect x="31" y="60" width="10" height="20" fill="#c8b898"/><circle cx="36" cy="39" r="3.5" fill="#a07858"/><circle cx="43" cy="42" r="2.5" fill="#e06050"/></g></svg></div><div class="lab"><svg width="14" height="14" viewBox="0 0 14 14"><path d="M6.75 0.8 C8.4 0.8 9.5 2.2 9.5 4.2 C9.5 6 9.2 7.4 8.9 8.6 C8.6 10.2 7.9 11.2 6.75 11.2 C5.6 11.2 4.9 10.2 4.6 8.6 C4.3 7.4 4 6 4 4.2 C4 2.2 5.1 0.8 6.75 0.8Z" fill="#f05a5a"/><rect x="6.2" y="11" width="1.1" height="1.3" fill="#f05a5a"/><ellipse cx="6.9" cy="12.7" rx="3" ry="0.8" fill="#f05a5a"/><path d="M0.6 13.4 L13.6 0.4" stroke="#2e2e2e" stroke-width="2.2"/><path d="M0.6 13.4 L13.6 0.4" stroke="#f05a5a" stroke-width="1.4"/></svg>Kheisya Lovely Ervin</div></div><div class="tile" style="left:62px;top:684px"><div class="av"><svg width="80" height="80" viewBox="0 0 80 80"><defs><filter id="bmukhlis" x="0" y="0" width="1" height="1"><feGaussianBlur stdDeviation="0.7"/></filter></defs><g filter="url(#bmukhlis)"><rect width="80" height="80" fill="#e00404"/>
<path d="M4 80 C8 66 20 58 40 58 C60 58 72 66 76 80Z" fill="#1c1c20"/><path d="M30 56 L40 74 L50 56Z" fill="#f2f2f2"/><path d="M38 66 L42 66 L44 80 H36Z" fill="#555"/>
<rect x="32" y="46" width="16" height="12" fill="#c8987a"/>
<ellipse cx="42" cy="32" rx="17" ry="22" fill="#dcb49a"/><ellipse cx="24" cy="34" rx="3" ry="5" fill="#d0a080"/>
<path d="M23 30 C20 12 30 4 42 4 C56 4 64 12 60 30 C58 20 52 12 42 12 C32 12 26 18 23 30Z" fill="#1e1a18"/>
<ellipse cx="35" cy="30" rx="3" ry="1.2" fill="#3a2418"/><ellipse cx="51" cy="30" rx="3" ry="1.2" fill="#3a2418"/><path d="M35 44.5 C39 43 45 43 49 44.5 L48.5 46 C45 45 39 45 35.5 46Z" fill="#4a3428"/></g></svg></div><div class="lab"><svg width="14" height="14" viewBox="0 0 14 14"><path d="M6.75 0.8 C8.4 0.8 9.5 2.2 9.5 4.2 C9.5 6 9.2 7.4 8.9 8.6 C8.6 10.2 7.9 11.2 6.75 11.2 C5.6 11.2 4.9 10.2 4.6 8.6 C4.3 7.4 4 6 4 4.2 C4 2.2 5.1 0.8 6.75 0.8Z" fill="#f05a5a"/><rect x="6.2" y="11" width="1.1" height="1.3" fill="#f05a5a"/><ellipse cx="6.9" cy="12.7" rx="3" ry="0.8" fill="#f05a5a"/><path d="M0.6 13.4 L13.6 0.4" stroke="#2e2e2e" stroke-width="2.2"/><path d="M0.6 13.4 L13.6 0.4" stroke="#f05a5a" stroke-width="1.4"/></svg>Mukhlis PGRI</div></div><div class="tile" style="left:228px;top:684px"><div class="big">Endah<span style="word-spacing:-1.5px">&nbsp; </span>Setyowat...</div><div class="lab" style="width:160px"><svg width="14" height="14" viewBox="0 0 14 14"><path d="M6.75 0.8 C8.4 0.8 9.5 2.2 9.5 4.2 C9.5 6 9.2 7.4 8.9 8.6 C8.6 10.2 7.9 11.2 6.75 11.2 C5.6 11.2 4.9 10.2 4.6 8.6 C4.3 7.4 4 6 4 4.2 C4 2.2 5.1 0.8 6.75 0.8Z" fill="#f05a5a"/><rect x="6.2" y="11" width="1.1" height="1.3" fill="#f05a5a"/><ellipse cx="6.9" cy="12.7" rx="3" ry="0.8" fill="#f05a5a"/><path d="M0.6 13.4 L13.6 0.4" stroke="#2e2e2e" stroke-width="2.2"/><path d="M0.6 13.4 L13.6 0.4" stroke="#f05a5a" stroke-width="1.4"/></svg>Endah Setyowati,RA A...</div></div><div class="tile" style="left:394px;top:684px"><div class="big">Nurul<span style="word-spacing:-1.5px">&nbsp; </span>Azizah,<span style="word-spacing:-1.5px">&nbsp; </span>S....</div><div class="lab" style="width:160px"><svg width="14" height="14" viewBox="0 0 14 14"><path d="M6.75 0.8 C8.4 0.8 9.5 2.2 9.5 4.2 C9.5 6 9.2 7.4 8.9 8.6 C8.6 10.2 7.9 11.2 6.75 11.2 C5.6 11.2 4.9 10.2 4.6 8.6 C4.3 7.4 4 6 4 4.2 C4 2.2 5.1 0.8 6.75 0.8Z" fill="#f05a5a"/><rect x="6.2" y="11" width="1.1" height="1.3" fill="#f05a5a"/><ellipse cx="6.9" cy="12.7" rx="3" ry="0.8" fill="#f05a5a"/><path d="M0.6 13.4 L13.6 0.4" stroke="#2e2e2e" stroke-width="2.2"/><path d="M0.6 13.4 L13.6 0.4" stroke="#f05a5a" stroke-width="1.4"/></svg>Nurul Azizah, S.Pd, M...</div></div><div class="tile" style="left:560px;top:684px"><div class="big">Admin</div><div class="lab"><svg width="14" height="14" viewBox="0 0 14 14"><path d="M6.75 0.8 C8.4 0.8 9.5 2.2 9.5 4.2 C9.5 6 9.2 7.4 8.9 8.6 C8.6 10.2 7.9 11.2 6.75 11.2 C5.6 11.2 4.9 10.2 4.6 8.6 C4.3 7.4 4 6 4 4.2 C4 2.2 5.1 0.8 6.75 0.8Z" fill="#f05a5a"/><rect x="6.2" y="11" width="1.1" height="1.3" fill="#f05a5a"/><ellipse cx="6.9" cy="12.7" rx="3" ry="0.8" fill="#f05a5a"/><path d="M0.6 13.4 L13.6 0.4" stroke="#2e2e2e" stroke-width="2.2"/><path d="M0.6 13.4 L13.6 0.4" stroke="#f05a5a" stroke-width="1.4"/></svg>Admin</div></div><div class="tile" style="left:726px;top:684px"><div class="big">MA<span style="word-spacing:-1.5px">&nbsp; </span>AL<span style="word-spacing:-1.5px">&nbsp; </span>HIDAYA...</div><div class="lab" style="width:160px"><svg width="14" height="14" viewBox="0 0 14 14"><path d="M6.75 0.8 C8.4 0.8 9.5 2.2 9.5 4.2 C9.5 6 9.2 7.4 8.9 8.6 C8.6 10.2 7.9 11.2 6.75 11.2 C5.6 11.2 4.9 10.2 4.6 8.6 C4.3 7.4 4 6 4 4.2 C4 2.2 5.1 0.8 6.75 0.8Z" fill="#f05a5a"/><rect x="6.2" y="11" width="1.1" height="1.3" fill="#f05a5a"/><ellipse cx="6.9" cy="12.7" rx="3" ry="0.8" fill="#f05a5a"/><path d="M0.6 13.4 L13.6 0.4" stroke="#2e2e2e" stroke-width="2.2"/><path d="M0.6 13.4 L13.6 0.4" stroke="#f05a5a" stroke-width="1.4"/></svg>MA AL HIDAYAH, SAD...</div></div><div class="tile" style="left:892px;top:684px"><div class="big">Waginem</div><div class="lab"><svg width="14" height="14" viewBox="0 0 14 14"><path d="M6.75 0.8 C8.4 0.8 9.5 2.2 9.5 4.2 C9.5 6 9.2 7.4 8.9 8.6 C8.6 10.2 7.9 11.2 6.75 11.2 C5.6 11.2 4.9 10.2 4.6 8.6 C4.3 7.4 4 6 4 4.2 C4 2.2 5.1 0.8 6.75 0.8Z" fill="#f05a5a"/><rect x="6.2" y="11" width="1.1" height="1.3" fill="#f05a5a"/><ellipse cx="6.9" cy="12.7" rx="3" ry="0.8" fill="#f05a5a"/><path d="M0.6 13.4 L13.6 0.4" stroke="#2e2e2e" stroke-width="2.2"/><path d="M0.6 13.4 L13.6 0.4" stroke="#f05a5a" stroke-width="1.4"/></svg>Waginem</div></div><div class="tile" style="left:1058px;top:684px"><div class="big">Sulastri_MTs<span style="word-spacing:-1.5px">&nbsp; </span>Al...</div><div class="lab"><svg width="14" height="14" viewBox="0 0 14 14"><path d="M6.75 0.8 C8.4 0.8 9.5 2.2 9.5 4.2 C9.5 6 9.2 7.4 8.9 8.6 C8.6 10.2 7.9 11.2 6.75 11.2 C5.6 11.2 4.9 10.2 4.6 8.6 C4.3 7.4 4 6 4 4.2 C4 2.2 5.1 0.8 6.75 0.8Z" fill="#f05a5a"/><rect x="6.2" y="11" width="1.1" height="1.3" fill="#f05a5a"/><ellipse cx="6.9" cy="12.7" rx="3" ry="0.8" fill="#f05a5a"/><path d="M0.6 13.4 L13.6 0.4" stroke="#2e2e2e" stroke-width="2.2"/><path d="M0.6 13.4 L13.6 0.4" stroke="#f05a5a" stroke-width="1.4"/></svg>Sulastri_MTs Al Asror</div></div><svg class="a" style="left:36px;top:812px" width="26" height="26" viewBox="0 0 26 26"><rect x="7" y="3" width="9" height="15" rx="4.5" fill="#b4b4b4"/><path d="M4 12 C4 18 7.5 20.5 11.5 20.5 C15.5 20.5 19 18 19 12" fill="none" stroke="#b4b4b4" stroke-width="1.6"/><rect x="10.7" y="20" width="1.6" height="4" fill="#b4b4b4"/><rect x="7" y="23" width="9" height="1.6" fill="#b4b4b4"/><circle cx="17" cy="5.5" r="6.5" fill="#e02828" stroke="#1a1a1a" stroke-width="1"/><rect x="16.1" y="1.8" width="1.8" height="5" fill="#fff"/><rect x="16.1" y="7.7" width="1.8" height="1.8" fill="#fff"/></svg><svg class="a" style="left:73px;top:820px" width="10" height="7" viewBox="0 0 10 7"><path d="M1.5 5.5 L5 2 L8.5 5.5" fill="none" stroke="#c8c8c8" stroke-width="1.4"/></svg><div class="tb" style="left:-24px;width:140px;top:841px;color:#d2d2d2">Audio</div><svg class="a" style="left:125px;top:811px" width="28" height="27" viewBox="0 0 28 27"><rect x="2" y="7" width="17" height="14" rx="2.5" fill="#b4b4b4"/><path d="M19 12 L26 8 V20 L19 16Z" fill="#b4b4b4"/><path d="M3 26 L25 1" stroke="#1a1a1a" stroke-width="3"/><path d="M3 26 L25 1" stroke="#e04a4a" stroke-width="1.4"/></svg><svg class="a" style="left:171px;top:820px" width="10" height="7" viewBox="0 0 10 7"><path d="M1.5 5.5 L5 2 L8.5 5.5" fill="none" stroke="#c8c8c8" stroke-width="1.4"/></svg><div class="tb" style="left:68px;width:140px;top:841px;color:#d2d2d2">Start Video</div><svg class="a" style="left:227px;top:813px" width="20" height="22" viewBox="0 0 20 22"><path d="M10 1 L18.5 4 V10 C18.5 15.5 14.5 19 10 21 C5.5 19 1.5 15.5 1.5 10 V4Z" fill="none" stroke="#b4b4b4" stroke-width="1.6"/><path d="M10 2 V11 H2 C2 6 2 4.5 2 4.5Z M10 11 H18 C17.5 15.5 14 18.5 10 20.2Z" fill="#b4b4b4"/></svg><div class="tb" style="left:166px;width:140px;top:841px;color:#d2d2d2">Security</div><svg class="a" style="left:329px;top:815px" width="26" height="19" viewBox="0 0 26 19"><circle cx="8" cy="4.5" r="4" fill="#b4b4b4"/><circle cx="18.5" cy="6" r="3.5" fill="#b4b4b4"/><path d="M0.5 18 C0.5 12.5 3.5 10 8 10 C12.5 10 15.5 12.5 15.5 18Z" fill="#b4b4b4"/><path d="M14 18 C14 14 15.5 11 19 11 C22.5 11 25.5 13 25.5 18Z" fill="#b4b4b4"/></svg><div class="t" style="left:358px;top:817px;font-size:12px;color:#d2d2d2">216</div><svg class="a" style="left:390px;top:820px" width="10" height="7" viewBox="0 0 10 7"><path d="M1.5 5.5 L5 2 L8.5 5.5" fill="none" stroke="#c8c8c8" stroke-width="1.4"/></svg><div class="tb" style="left:271px;width:140px;top:841px;color:#d2d2d2">Participants</div><svg class="a" style="left:440px;top:808px" width="32" height="27" viewBox="0 0 32 27"><path d="M3 8 C3 7 4 6 5 6 H20 C21 6 22 7 22 8 V19 C22 20 21 21 20 21 H11 L6 25.5 V21 H5 C4 21 3 20 3 19Z" fill="#b4b4b4"/><circle cx="23" cy="8" r="7.5" fill="#e02828" stroke="#1a1a1a" stroke-width="1"/></svg><div class="t" style="left:459px;top:810px;width:8px;text-align:center;font-size:11px;font-weight:bold;color:#fff">6</div><svg class="a" style="left:480px;top:820px" width="10" height="7" viewBox="0 0 10 7"><path d="M1.5 5.5 L5 2 L8.5 5.5" fill="none" stroke="#c8c8c8" stroke-width="1.4"/></svg><div class="tb" style="left:382px;width:140px;top:841px;color:#d2d2d2">Chat</div><div class="a" style="left:534px;top:815px;width:24px;height:18px;border-radius:3px;background:#23d160"></div><svg class="a" style="left:540px;top:817px" width="12" height="14" viewBox="0 0 12 14"><path d="M6 2 L10 6.5 H7.2 V12 H4.8 V6.5 H2Z" fill="#111"/></svg><svg class="a" style="left:578px;top:820px" width="10" height="7" viewBox="0 0 10 7"><path d="M1.5 5.5 L5 2 L8.5 5.5" fill="none" stroke="#c8c8c8" stroke-width="1.4"/></svg><div class="tb" style="left:475px;width:140px;top:841px;color:#3ecf6c">Share Screen</div><div class="a" style="left:640px;top:812px;width:20px;height:20px;border-radius:3px;background:#b4b4b4"></div><div class="a" style="left:646px;top:818px;width:3px;height:8px;background:#1a1a1a"></div><div class="a" style="left:651px;top:818px;width:3px;height:8px;background:#1a1a1a"></div><div class="a" style="left:665px;top:812px;width:20px;height:20px;border-radius:3px;background:#b4b4b4"></div><div class="a" style="left:670px;top:817px;width:10px;height:10px;background:#1a1a1a"></div><div class="tb" style="left:591px;width:140px;top:843px;color:#d2d2d2">Pause/Stop Recording</div><svg class="a" style="left:770px;top:814px" width="20" height="20" viewBox="0 0 20 20" fill="#b4b4b4"><rect x="0" y="0" width="9" height="9" rx="2"/><rect x="11" y="0" width="9" height="9" rx="2"/><rect x="0" y="11" width="9" height="9" rx="2"/><rect x="11" y="11" width="9" height="9" rx="2"/></svg><div class="tb" style="left:710px;width:140px;top:841px;color:#d2d2d2">Breakout Rooms</div><svg class="a" style="left:862px;top:812px" width="24" height="22" viewBox="0 0 24 22"><circle cx="10" cy="12.5" r="9" fill="#b4b4b4"/><circle cx="7" cy="10.5" r="1.3" fill="#1a1a1a"/><circle cx="12.5" cy="10.5" r="1.3" fill="#1a1a1a"/><path d="M6 14 C7.5 17 12 17 14 14" fill="none" stroke="#1a1a1a" stroke-width="1.5"/><path d="M19 1 V8 M15.5 4.5 H22.5" stroke="#1a1a1a" stroke-width="4"/><path d="M19 1 V8 M15.5 4.5 H22.5" stroke="#b4b4b4" stroke-width="1.5"/></svg><svg class="a" style="left:895px;top:820px" width="10" height="7" viewBox="0 0 10 7"><path d="M1.5 5.5 L5 2 L8.5 5.5" fill="none" stroke="#c8c8c8" stroke-width="1.4"/></svg><div class="tb" style="left:801px;width:140px;top:841px;color:#d2d2d2">Reactions</div><svg class="a" style="left:942px;top:816px" width="20" height="18" viewBox="0 0 20 18"><circle cx="14.5" cy="3.5" r="2.6" fill="none" stroke="#b4b4b4" stroke-width="1.5"/><circle cx="3.5" cy="14.5" r="2.6" fill="none" stroke="#b4b4b4" stroke-width="1.5"/><path d="M2 10 V4 C2 2.8 2.8 2 4 2 H9 M9 16 H14 C15.2 16 16 15.2 16 14 V9" fill="none" stroke="#b4b4b4" stroke-width="1.5"/></svg><div class="tb" style="left:881px;width:140px;top:841px;color:#d2d2d2">Apps</div><svg class="a" style="left:1030px;top:814px" width="22" height="19" viewBox="0 0 22 19"><path d="M5 15.5 H3.5 C2.4 15.5 1.5 14.6 1.5 13.5 V3.5 C1.5 2.4 2.4 1.5 3.5 1.5 H17.5 C18.6 1.5 19.5 2.4 19.5 3.5 V11" fill="none" stroke="#b4b4b4" stroke-width="1.5"/><rect x="8" y="13" width="13" height="4" rx="2" fill="#b4b4b4"/></svg><div class="tb" style="left:971px;width:140px;top:841px;color:#d2d2d2">Whiteboards</div><svg class="a" style="left:1119px;top:820px" width="22" height="6" viewBox="0 0 22 6" fill="#b4b4b4"><circle cx="3" cy="3" r="2.2"/><circle cx="11" cy="3" r="2.2"/><circle cx="19" cy="3" r="2.2"/></svg><div class="tb" style="left:1060px;width:140px;top:841px;color:#d2d2d2">More</div><div class="a" style="left:1207px;top:820px;width:61px;height:27px;border-radius:6px;background:#bd2426"></div><div class="t" style="left:1207px;width:61px;top:827px;text-align:center;font-size:12.5px;font-weight:bold;color:#fff">End</div><div class="a" style="left:1280px;top:23px;width:320px;height:837px;background:#fff"></div><div class="a" style="left:1279px;top:23px;width:1px;height:837px;background:#0a0a0a"></div><div class="a" style="left:0;top:23px;width:1280px;height:1px;background:#0c0c0c"></div><svg class="a" style="left:1299px;top:42px" width="10" height="7" viewBox="0 0 10 7"><path d="M1 1.5 L5 5.5 L9 1.5" fill="none" stroke="#5a5a6a" stroke-width="1.4"/></svg><div class="t" style="left:1280px;width:320px;top:38px;text-align:center;font-size:13px;font-weight:bold;color:#232333">Participants (215)</div><div class="a" style="left:1299px;top:77px;width:285px;height:32px;border-radius:8px;border:1px solid #c6c6d4;background:#fff"></div><svg class="a" style="left:1310px;top:85px" width="14" height="15" viewBox="0 0 14 15"><circle cx="6" cy="6.5" r="4.6" fill="none" stroke="#6e6e7e" stroke-width="1.3"/><path d="M9.3 10 L12.5 13.3" stroke="#6e6e7e" stroke-width="1.4"/></svg><div class="t" style="left:1327px;top:87px;font-size:12.5px;color:#6e6e7e">Find a participant</div><div class="t" style="left:1300px;top:125px;font-size:13px;font-weight:bold;color:#232333">Waiting Room (1)</div><svg class="a" style="left:1419px;top:128px" width="11" height="7" viewBox="0 0 11 7"><path d="M1.5 1.5 L5.5 5.5 L9.5 1.5" fill="none" stroke="#5a5a6a" stroke-width="1.3"/></svg><div class="t" style="left:1522px;top:125px;font-size:13px;font-weight:bold;color:#0e72ed">Message</div><div class="a" style="left:1303px;top:158px;width:26px;height:26px;border-radius:6px;background:#b8dcfa;color:#fff;font-size:12px;line-height:26px;text-align:center">OA</div><div class="t" style="left:1341px;top:166px;font-size:12.5px;color:#232333">OPPO A31</div><div class="t" style="left:1300px;top:206px;font-size:13px;font-weight:bold;color:#232333">Joined (215)</div><svg class="a" style="left:1386px;top:208px" width="11" height="7" viewBox="0 0 11 7"><path d="M1.5 1.5 L5.5 5.5 L9.5 1.5" fill="none" stroke="#5a5a6a" stroke-width="1.3"/></svg><div class="a" style="left:1589px;top:108px;width:9px;height:655px;border-radius:4px;background:#f4f4f8"></div><div class="a" style="left:1590px;top:111px;width:7px;height:49px;border-radius:4px;background:#b3b3bd"></div><div class="prow" style="top:232px"><svg class="pav" style="border-radius:0;top:6px;left:22px;width:26px;height:27px" width="26" height="27" viewBox="0 0 25 26"><path d="M1.5 3 C6 0.6 19 0.6 23.5 3 C24.5 10 24 18 20.5 24.5 C16 26 9 26 4.5 24.5 C1 18 0.5 10 1.5 3Z" fill="#d4a848"/><path d="M2.8 4 C7 2 18 2 22.2 4 C23 10 22.6 17.5 19.5 23.3 C15.5 24.6 9.5 24.6 5.5 23.3 C2.4 17.5 2 10 2.8 4Z" fill="#1c7cc8"/><path d="M4 5.2 C8 3.8 17 3.8 21 5.2" stroke="#e8c870" stroke-width="0.7" fill="none"/><path d="M12.5 6.5 L14.5 9.5 L15.8 12.5 L15 15.5 L12.5 19 L10 15.5 L9.2 12.5 L10.5 9.5Z" fill="#ee3030"/><path d="M6.5 13 C9.5 15 11 19 11.5 24.5 L9 24.5 C7.5 20.5 6 17 6.5 13Z M18.5 13 C15.5 15 14 19 13.5 24.5 L16 24.5 C17.5 20.5 19 17 18.5 13Z" fill="#f0d070"/><path d="M4.5 16 C6 19 7 21 8 24 M20.5 16 C19 19 18 21 17 24" stroke="#e0b850" stroke-width="1.2" fill="none"/></svg><div class="pname">FPMIPATI (Host, me)</div><svg class="pic" style="left:232px;top:14px" width="17" height="13" viewBox="0 0 17 13"><path d="M4 11.5 H13 C14.9 11.5 16 10.3 16 8.8 C16 7.3 14.9 6.2 13.5 6.1 C13.2 3.5 11.3 1.5 8.8 1.5 C6.6 1.5 4.9 2.8 4.3 4.8 C2.4 5 1 6.5 1 8.2 C1 10.1 2.3 11.5 4 11.5Z" fill="none" stroke="#8a8a98" stroke-width="1.1"/><circle cx="8.2" cy="7.3" r="2.4" fill="#f0303a"/></svg><svg class="pic" style="left:258px;top:12px" width="12" height="17" viewBox="0 0 12 17"><rect x="3.2" y="0.7" width="5.6" height="10.5" rx="2.8" fill="none" stroke="#7a7a8a" stroke-width="1.1"/><path d="M1 7.5 C1 11 3 13 6 13 C9 13 11 11 11 7.5" fill="none" stroke="#7a7a8a" stroke-width="1.1"/><path d="M6 13 V15.5 M3.5 15.8 H8.5" stroke="#7a7a8a" stroke-width="1.1"/></svg><svg class="pic" style="left:280px;top:12px" width="17" height="17" viewBox="0 0 17 17"><rect x="0.8" y="3.1" width="10.6" height="9.5" rx="1.8" fill="none" stroke="#e02b2b" stroke-width="1.2"/><path d="M11.4 6.6 L15.8 3.8 V12 L11.4 9.2" fill="none" stroke="#e02b2b" stroke-width="1.2" stroke-linejoin="round"/><path d="M0.5 15.5 L15.8 0.5" stroke="#fff" stroke-width="2.4"/><path d="M0.5 15.5 L15.8 0.5" stroke="#e02b2b" stroke-width="1.1"/></svg></div><div class="prow" style="top:273px"><div class="pav" style="background:#2d7ec4;font-size:12.5px;font-weight:bold">1N</div><div class="pname">1956_Duwi&nbsp; Nuvit... (Co-host)</div><svg class="pic" style="left:232px;top:14px" width="17" height="13" viewBox="0 0 17 13"><path d="M4 11.5 H13 C14.9 11.5 16 10.3 16 8.8 C16 7.3 14.9 6.2 13.5 6.1 C13.2 3.5 11.3 1.5 8.8 1.5 C6.6 1.5 4.9 2.8 4.3 4.8 C2.4 5 1 6.5 1 8.2 C1 10.1 2.3 11.5 4 11.5Z" fill="none" stroke="#8a8a98" stroke-width="1.1"/><circle cx="8.2" cy="7.3" r="2.4" fill="#f0303a"/></svg><svg class="pic" style="left:258px;top:12px" width="12" height="17" viewBox="0 0 12 17"><rect x="3.2" y="0.7" width="5.6" height="10.5" rx="2.8" fill="#fff" stroke="#6a6a7a" stroke-width="1.1"/><path d="M3.2 5 H8.8 V8.5 C8.8 10 7.6 11.2 6 11.2 C4.4 11.2 3.2 10 3.2 8.5Z" fill="#6a6a7a"/><path d="M1 7.5 C1 11 3 13 6 13 C9 13 11 11 11 7.5" fill="none" stroke="#6a6a7a" stroke-width="1.1"/><path d="M6 13 V15.5 M3.5 15.8 H8.5" stroke="#6a6a7a" stroke-width="1.1"/></svg><svg class="pic" style="left:280px;top:12px" width="17" height="17" viewBox="0 0 17 17"><rect x="0.8" y="3.1" width="10.6" height="9.5" rx="1.8" fill="none" stroke="#6e6e80" stroke-width="1.2"/><path d="M11.4 6.6 L15.8 3.8 V12 L11.4 9.2" fill="none" stroke="#6e6e80" stroke-width="1.2" stroke-linejoin="round"/></svg></div><div class="prow" style="top:314px"><div class="pav" style="background:#2d7ec4;font-size:12.5px;font-weight:bold">FK</div><div class="pname">fatkhuronji Keme... (Co-host)</div><svg class="pic" style="left:232px;top:14px" width="17" height="13" viewBox="0 0 17 13"><path d="M4 11.5 H13 C14.9 11.5 16 10.3 16 8.8 C16 7.3 14.9 6.2 13.5 6.1 C13.2 3.5 11.3 1.5 8.8 1.5 C6.6 1.5 4.9 2.8 4.3 4.8 C2.4 5 1 6.5 1 8.2 C1 10.1 2.3 11.5 4 11.5Z" fill="none" stroke="#8a8a98" stroke-width="1.1"/><circle cx="8.2" cy="7.3" r="2.4" fill="#f0303a"/></svg><svg class="pic" style="left:258px;top:12px" width="12" height="17" viewBox="0 0 12 17"><rect x="3.2" y="0.7" width="5.6" height="10.5" rx="2.8" fill="none" stroke="#7a7a8a" stroke-width="1.1"/><path d="M1 7.5 C1 11 3 13 6 13 C9 13 11 11 11 7.5" fill="none" stroke="#7a7a8a" stroke-width="1.1"/><path d="M6 13 V15.5 M3.5 15.8 H8.5" stroke="#7a7a8a" stroke-width="1.1"/></svg><svg class="pic" style="left:280px;top:12px" width="17" height="17" viewBox="0 0 17 17"><rect x="0.8" y="3.1" width="10.6" height="9.5" rx="1.8" fill="none" stroke="#6e6e80" stroke-width="1.2"/><path d="M11.4 6.6 L15.8 3.8 V12 L11.4 9.2" fill="none" stroke="#6e6e80" stroke-width="1.2" stroke-linejoin="round"/></svg></div><div class="prow" style="top:355px"><div class="pav" style="background:#1e9e86;font-size:14px;font-weight:bold">A</div><div class="pname">Admin (Co-host)</div><svg class="pic" style="left:232px;top:14px" width="17" height="13" viewBox="0 0 17 13"><path d="M4 11.5 H13 C14.9 11.5 16 10.3 16 8.8 C16 7.3 14.9 6.2 13.5 6.1 C13.2 3.5 11.3 1.5 8.8 1.5 C6.6 1.5 4.9 2.8 4.3 4.8 C2.4 5 1 6.5 1 8.2 C1 10.1 2.3 11.5 4 11.5Z" fill="none" stroke="#8a8a98" stroke-width="1.1"/><circle cx="8.2" cy="7.3" r="2.4" fill="#f0303a"/></svg><svg class="pic" style="left:256px;top:11px" width="17" height="17" viewBox="0 0 17 17"><rect x="5.7" y="1.2" width="5.6" height="10" rx="2.8" fill="none" stroke="#e02b2b" stroke-width="1.1"/><path d="M3.5 7.5 C3.5 11 5.5 13 8.5 13 C11.5 13 13.5 11 13.5 7.5" fill="none" stroke="#e02b2b" stroke-width="1.1"/><path d="M8.5 13 V15.5 M6 15.8 H11" stroke="#e02b2b" stroke-width="1.1"/><path d="M1 16 L16 1" stroke="#fff" stroke-width="2.6"/><path d="M1 16 L16 1" stroke="#e02b2b" stroke-width="1.2"/></svg><svg class="pic" style="left:280px;top:12px" width="17" height="17" viewBox="0 0 17 17"><rect x="0.8" y="3.1" width="10.6" height="9.5" rx="1.8" fill="none" stroke="#e02b2b" stroke-width="1.2"/><path d="M11.4 6.6 L15.8 3.8 V12 L11.4 9.2" fill="none" stroke="#e02b2b" stroke-width="1.2" stroke-linejoin="round"/><path d="M0.5 15.5 L15.8 0.5" stroke="#fff" stroke-width="2.4"/><path d="M0.5 15.5 L15.8 0.5" stroke="#e02b2b" stroke-width="1.1"/></svg></div><div class="prow" style="top:396px"><div class="pav" style="background:#8e44ad;font-size:12.5px;font-weight:bold">NK</div><div class="pname">Nur Khoiri (Co-host)</div><svg class="pic" style="left:232px;top:14px" width="17" height="13" viewBox="0 0 17 13"><path d="M4 11.5 H13 C14.9 11.5 16 10.3 16 8.8 C16 7.3 14.9 6.2 13.5 6.1 C13.2 3.5 11.3 1.5 8.8 1.5 C6.6 1.5 4.9 2.8 4.3 4.8 C2.4 5 1 6.5 1 8.2 C1 10.1 2.3 11.5 4 11.5Z" fill="none" stroke="#8a8a98" stroke-width="1.1"/><circle cx="8.2" cy="7.3" r="2.4" fill="#f0303a"/></svg><svg class="pic" style="left:256px;top:11px" width="17" height="17" viewBox="0 0 17 17"><rect x="5.7" y="1.2" width="5.6" height="10" rx="2.8" fill="none" stroke="#e02b2b" stroke-width="1.1"/><path d="M3.5 7.5 C3.5 11 5.5 13 8.5 13 C11.5 13 13.5 11 13.5 7.5" fill="none" stroke="#e02b2b" stroke-width="1.1"/><path d="M8.5 13 V15.5 M6 15.8 H11" stroke="#e02b2b" stroke-width="1.1"/><path d="M1 16 L16 1" stroke="#fff" stroke-width="2.6"/><path d="M1 16 L16 1" stroke="#e02b2b" stroke-width="1.2"/></svg><svg class="pic" style="left:280px;top:12px" width="17" height="17" viewBox="0 0 17 17"><rect x="0.8" y="3.1" width="10.6" height="9.5" rx="1.8" fill="none" stroke="#6e6e80" stroke-width="1.2"/><path d="M11.4 6.6 L15.8 3.8 V12 L11.4 9.2" fill="none" stroke="#6e6e80" stroke-width="1.2" stroke-linejoin="round"/></svg></div><div class="prow" style="top:437px"><div class="pav" style="background:#2d7ec4;font-size:12.5px;font-weight:bold">AK</div><div class="pname">ABDUL KHARIS</div><svg class="pic" style="left:256px;top:11px" width="17" height="17" viewBox="0 0 17 17"><rect x="5.7" y="1.2" width="5.6" height="10" rx="2.8" fill="none" stroke="#e02b2b" stroke-width="1.1"/><path d="M3.5 7.5 C3.5 11 5.5 13 8.5 13 C11.5 13 13.5 11 13.5 7.5" fill="none" stroke="#e02b2b" stroke-width="1.1"/><path d="M8.5 13 V15.5 M6 15.8 H11" stroke="#e02b2b" stroke-width="1.1"/><path d="M1 16 L16 1" stroke="#fff" stroke-width="2.6"/><path d="M1 16 L16 1" stroke="#e02b2b" stroke-width="1.2"/></svg><svg class="pic" style="left:280px;top:12px" width="17" height="17" viewBox="0 0 17 17"><rect x="0.8" y="3.1" width="10.6" height="9.5" rx="1.8" fill="none" stroke="#e02b2b" stroke-width="1.2"/><path d="M11.4 6.6 L15.8 3.8 V12 L11.4 9.2" fill="none" stroke="#e02b2b" stroke-width="1.2" stroke-linejoin="round"/><path d="M0.5 15.5 L15.8 0.5" stroke="#fff" stroke-width="2.4"/><path d="M0.5 15.5 L15.8 0.5" stroke="#e02b2b" stroke-width="1.1"/></svg></div><div class="prow" style="top:478px"><div class="pav" style="background:#27a352;font-size:12.5px;font-weight:bold">AL</div><div class="pname">ABDUL LATIF</div><svg class="pic" style="left:280px;top:11px" width="17" height="17" viewBox="0 0 17 17"><rect x="5.7" y="1.2" width="5.6" height="10" rx="2.8" fill="none" stroke="#e02b2b" stroke-width="1.1"/><path d="M3.5 7.5 C3.5 11 5.5 13 8.5 13 C11.5 13 13.5 11 13.5 7.5" fill="none" stroke="#e02b2b" stroke-width="1.1"/><path d="M8.5 13 V15.5 M6 15.8 H11" stroke="#e02b2b" stroke-width="1.1"/><path d="M1 16 L16 1" stroke="#fff" stroke-width="2.6"/><path d="M1 16 L16 1" stroke="#e02b2b" stroke-width="1.2"/></svg></div><div class="prow" style="top:519px"><svg class="pav" width="25" height="25" viewBox="0 0 25 25"><defs><filter id="fphoto1"><feGaussianBlur stdDeviation="0.45"/></filter></defs><g filter="url(#fphoto1)"><rect width="25" height="25" fill="#c4c0c6"/><rect width="25" height="3" fill="#2a3430"/><path d="M7 25 V12 C7 9 10 7.5 13 7.5 C16 7.5 19 9 19 12 V25Z" fill="#2a2c38"/><ellipse cx="14" cy="5.5" rx="2.5" ry="3" fill="#3a2a28"/><path d="M6 11 L9 10 L9 14 L7 14Z" fill="#c8a090"/><path d="M22 6 L24.5 6 V25 H21Z" fill="#28307a"/><ellipse cx="6" cy="18.5" rx="6" ry="3.5" fill="#e8ecea"/><path d="M0.5 19 C3 21 9 21 11.5 19" stroke="#1a8a3a" stroke-width="1.3" fill="none"/><ellipse cx="6" cy="21.5" rx="6" ry="2.5" fill="#4a70b8"/><ellipse cx="14" cy="25" rx="7" ry="4" fill="#f4f6ee"/><circle cx="14" cy="22.5" r="1.2" fill="#2aa040"/></g></svg><div class="pname">Abdul Mujab</div><svg class="pic" style="left:256px;top:11px" width="17" height="17" viewBox="0 0 17 17"><rect x="5.7" y="1.2" width="5.6" height="10" rx="2.8" fill="none" stroke="#e02b2b" stroke-width="1.1"/><path d="M3.5 7.5 C3.5 11 5.5 13 8.5 13 C11.5 13 13.5 11 13.5 7.5" fill="none" stroke="#e02b2b" stroke-width="1.1"/><path d="M8.5 13 V15.5 M6 15.8 H11" stroke="#e02b2b" stroke-width="1.1"/><path d="M1 16 L16 1" stroke="#fff" stroke-width="2.6"/><path d="M1 16 L16 1" stroke="#e02b2b" stroke-width="1.2"/></svg><svg class="pic" style="left:280px;top:12px" width="17" height="17" viewBox="0 0 17 17"><rect x="0.8" y="3.1" width="10.6" height="9.5" rx="1.8" fill="none" stroke="#6e6e80" stroke-width="1.2"/><path d="M11.4 6.6 L15.8 3.8 V12 L11.4 9.2" fill="none" stroke="#6e6e80" stroke-width="1.2" stroke-linejoin="round"/></svg></div><div class="prow" style="top:560px"><div class="pav" style="background:#8e44ad;font-size:12.5px;font-weight:bold">AA</div><div class="pname">Adinda Aulia Nugrahani_MTs A...</div><svg class="pic" style="left:256px;top:11px" width="17" height="17" viewBox="0 0 17 17"><rect x="5.7" y="1.2" width="5.6" height="10" rx="2.8" fill="none" stroke="#e02b2b" stroke-width="1.1"/><path d="M3.5 7.5 C3.5 11 5.5 13 8.5 13 C11.5 13 13.5 11 13.5 7.5" fill="none" stroke="#e02b2b" stroke-width="1.1"/><path d="M8.5 13 V15.5 M6 15.8 H11" stroke="#e02b2b" stroke-width="1.1"/><path d="M1 16 L16 1" stroke="#fff" stroke-width="2.6"/><path d="M1 16 L16 1" stroke="#e02b2b" stroke-width="1.2"/></svg><svg class="pic" style="left:280px;top:12px" width="17" height="17" viewBox="0 0 17 17"><rect x="0.8" y="3.1" width="10.6" height="9.5" rx="1.8" fill="none" stroke="#6e6e80" stroke-width="1.2"/><path d="M11.4 6.6 L15.8 3.8 V12 L11.4 9.2" fill="none" stroke="#6e6e80" stroke-width="1.2" stroke-linejoin="round"/></svg></div><div class="prow" style="top:601px"><div class="pav" style="background:#6aa332;font-size:14px;font-weight:normal">A</div><div class="pname">Afiyatur Royanah</div><svg class="pic" style="left:256px;top:11px" width="17" height="17" viewBox="0 0 17 17"><rect x="5.7" y="1.2" width="5.6" height="10" rx="2.8" fill="none" stroke="#e02b2b" stroke-width="1.1"/><path d="M3.5 7.5 C3.5 11 5.5 13 8.5 13 C11.5 13 13.5 11 13.5 7.5" fill="none" stroke="#e02b2b" stroke-width="1.1"/><path d="M8.5 13 V15.5 M6 15.8 H11" stroke="#e02b2b" stroke-width="1.1"/><path d="M1 16 L16 1" stroke="#fff" stroke-width="2.6"/><path d="M1 16 L16 1" stroke="#e02b2b" stroke-width="1.2"/></svg><svg class="pic" style="left:280px;top:12px" width="17" height="17" viewBox="0 0 17 17"><rect x="0.8" y="3.1" width="10.6" height="9.5" rx="1.8" fill="none" stroke="#6e6e80" stroke-width="1.2"/><path d="M11.4 6.6 L15.8 3.8 V12 L11.4 9.2" fill="none" stroke="#6e6e80" stroke-width="1.2" stroke-linejoin="round"/></svg></div><div class="prow" style="top:642px"><svg class="pav" width="25" height="25" viewBox="0 0 25 25"><defs><filter id="fphoto2"><feGaussianBlur stdDeviation="0.45"/></filter></defs><g filter="url(#fphoto2)"><rect width="25" height="25" fill="#e6d8b4"/><rect x="0" y="15" width="7" height="7" fill="#d8d8d0"/><path d="M3 25 C4 20 8 18.5 12.5 18.5 C17 18.5 21 20 22 25Z" fill="#fff"/><path d="M3 25 C4 21 6 19.5 9 19 L11 25Z M22 25 C21 21 19 19.5 16 19 L14 25Z" fill="#2a2a40"/><ellipse cx="12.5" cy="12" rx="5.5" ry="7" fill="#b08a70"/><path d="M7 8 C7 3.5 9.5 2 12.5 2 C15.5 2 18 3.5 18 8 C15 6.5 10 6.5 7 8Z" fill="#303040"/></g></svg><div class="pname">Afni Ernawati</div><svg class="pic" style="left:256px;top:11px" width="17" height="17" viewBox="0 0 17 17"><rect x="5.7" y="1.2" width="5.6" height="10" rx="2.8" fill="none" stroke="#e02b2b" stroke-width="1.1"/><path d="M3.5 7.5 C3.5 11 5.5 13 8.5 13 C11.5 13 13.5 11 13.5 7.5" fill="none" stroke="#e02b2b" stroke-width="1.1"/><path d="M8.5 13 V15.5 M6 15.8 H11" stroke="#e02b2b" stroke-width="1.1"/><path d="M1 16 L16 1" stroke="#fff" stroke-width="2.6"/><path d="M1 16 L16 1" stroke="#e02b2b" stroke-width="1.2"/></svg><svg class="pic" style="left:280px;top:12px" width="17" height="17" viewBox="0 0 17 17"><rect x="0.8" y="3.1" width="10.6" height="9.5" rx="1.8" fill="none" stroke="#6e6e80" stroke-width="1.2"/><path d="M11.4 6.6 L15.8 3.8 V12 L11.4 9.2" fill="none" stroke="#6e6e80" stroke-width="1.2" stroke-linejoin="round"/></svg></div><div class="prow" style="top:683px"><svg class="pav" width="25" height="25" viewBox="0 0 25 25"><defs><filter id="fphoto3"><feGaussianBlur stdDeviation="0.45"/></filter></defs><g filter="url(#fphoto3)"><rect width="25" height="25" fill="#345038"/><path d="M0 0 H25 V10 C20 6 10 5 0 10Z" fill="#b8bcb8"/><path d="M3 2 L12 8 M14 0 L22 8" stroke="#e8ece8" stroke-width="1.2"/><ellipse cx="22" cy="15" rx="4.5" ry="6" fill="#1e2a60"/><ellipse cx="21.5" cy="15" rx="2.5" ry="3" fill="#d8a888"/><path d="M14 25 C14 20 16 18 20 18 C24 18 25 21 25 25Z" fill="#223060"/><path d="M11 25 C11 21 13 19.5 16 19.5 C19 19.5 20 21 20 25Z" fill="#2a4a60"/><circle cx="15.5" cy="15.5" r="3" fill="#d0a080"/><path d="M0 25 C0 21 3 19.5 6 19.5 C9 19.5 11 21 11 25Z" fill="#f0f0f0"/><ellipse cx="7" cy="14.5" rx="5" ry="6" fill="#e0b898"/><path d="M2 12 C2 8 4.5 6.5 7 6.5 C10 6.5 12 8 12 12 C10 10 4 10 2 12Z" fill="#1a1a1a"/></g></svg><div class="pname">Agustina Budian Kurniati_MTs I...</div><svg class="pic" style="left:256px;top:11px" width="17" height="17" viewBox="0 0 17 17"><rect x="5.7" y="1.2" width="5.6" height="10" rx="2.8" fill="none" stroke="#e02b2b" stroke-width="1.1"/><path d="M3.5 7.5 C3.5 11 5.5 13 8.5 13 C11.5 13 13.5 11 13.5 7.5" fill="none" stroke="#e02b2b" stroke-width="1.1"/><path d="M8.5 13 V15.5 M6 15.8 H11" stroke="#e02b2b" stroke-width="1.1"/><path d="M1 16 L16 1" stroke="#fff" stroke-width="2.6"/><path d="M1 16 L16 1" stroke="#e02b2b" stroke-width="1.2"/></svg><svg class="pic" style="left:280px;top:12px" width="17" height="17" viewBox="0 0 17 17"><rect x="0.8" y="3.1" width="10.6" height="9.5" rx="1.8" fill="none" stroke="#e02b2b" stroke-width="1.2"/><path d="M11.4 6.6 L15.8 3.8 V12 L11.4 9.2" fill="none" stroke="#e02b2b" stroke-width="1.2" stroke-linejoin="round"/><path d="M0.5 15.5 L15.8 0.5" stroke="#fff" stroke-width="2.4"/><path d="M0.5 15.5 L15.8 0.5" stroke="#e02b2b" stroke-width="1.1"/></svg></div><div class="prow" style="top:724px"><div class="pav" style="background:#00897b;font-size:14px;font-weight:normal">a</div><div class="pname">ahmad Bisyri</div><svg class="pic" style="left:256px;top:11px" width="17" height="17" viewBox="0 0 17 17"><rect x="5.7" y="1.2" width="5.6" height="10" rx="2.8" fill="none" stroke="#e02b2b" stroke-width="1.1"/><path d="M3.5 7.5 C3.5 11 5.5 13 8.5 13 C11.5 13 13.5 11 13.5 7.5" fill="none" stroke="#e02b2b" stroke-width="1.1"/><path d="M8.5 13 V15.5 M6 15.8 H11" stroke="#e02b2b" stroke-width="1.1"/><path d="M1 16 L16 1" stroke="#fff" stroke-width="2.6"/><path d="M1 16 L16 1" stroke="#e02b2b" stroke-width="1.2"/></svg><svg class="pic" style="left:280px;top:12px" width="17" height="17" viewBox="0 0 17 17"><rect x="0.8" y="3.1" width="10.6" height="9.5" rx="1.8" fill="none" stroke="#e02b2b" stroke-width="1.2"/><path d="M11.4 6.6 L15.8 3.8 V12 L11.4 9.2" fill="none" stroke="#e02b2b" stroke-width="1.2" stroke-linejoin="round"/><path d="M0.5 15.5 L15.8 0.5" stroke="#fff" stroke-width="2.4"/><path d="M0.5 15.5 L15.8 0.5" stroke="#e02b2b" stroke-width="1.1"/></svg></div><div class="a" style="left:1324px;top:779px;width:53px;height:24px;border-radius:6px;border:1px solid #8a8a98"></div><div class="t" style="left:1324px;width:53px;top:784px;text-align:center;font-size:12.5px;color:#232333">Invite</div><div class="a" style="left:1420px;top:779px;width:71px;height:24px;border-radius:6px;border:1px solid #8a8a98"></div><div class="t" style="left:1420px;width:71px;top:784px;text-align:center;font-size:12.5px;color:#232333">Mute All</div><div class="a" style="left:1534px;top:779px;width:23px;height:24px;border-radius:6px;border:1px solid #8a8a98"></div><svg class="a" style="left:1539px;top:788px" width="13" height="4" viewBox="0 0 13 4" fill="#232333"><circle cx="2" cy="2" r="1.2"/><circle cx="6.5" cy="2" r="1.2"/><circle cx="11" cy="2" r="1.2"/></svg><div class="a" style="left:1281px;top:816px;width:319px;height:1px;background:#ececf0"></div><svg class="a" style="left:1299px;top:836px" width="10" height="7" viewBox="0 0 10 7"><path d="M1 1.5 L5 5.5 L9 1.5" fill="none" stroke="#5a5a6a" stroke-width="1.4"/></svg><div class="t" style="left:1280px;width:320px;top:832px;text-align:center;font-size:13px;font-weight:bold;color:#232333">Chat</div><div class="a" style="left:0;top:860px;width:1600px;height:40px;background:linear-gradient(90deg,#213b46 0%,#203845 35%,#1f3344 58%,#1b2a45 82%,#1a2846 100%)"></div><svg class="a" style="left:15px;top:871px" width="18" height="18" viewBox="0 0 18 18" fill="#fff"><path d="M0 2.5 L7.3 1.5 V8.4 H0Z M8.2 1.4 L18 0 V8.4 H8.2Z M0 9.3 H7.3 V16.3 L0 15.4Z M8.2 9.3 H18 V18 L8.2 16.5Z"/></svg><svg class="a" style="left:63px;top:872px" width="18" height="18" viewBox="0 0 18 18"><circle cx="11" cy="7" r="5.5" fill="none" stroke="#fff" stroke-width="1.4"/><path d="M7 11 L1.5 16.5" stroke="#fff" stroke-width="1.6"/></svg><svg class="tk" style="left:110px" width="24" height="24" viewBox="0 0 24 24"><path d="M1 4 H9 L11 6 H23 V21 H1Z" fill="#e8b836"/><path d="M1 8 H23 V21 H1Z" fill="#fcd05a"/><rect x="8" y="13" width="8" height="5" fill="#2a86d0"/><rect x="6" y="17" width="12" height="3" fill="#3a9ae8"/></svg><div class="a" style="left:103px;top:898px;width:40px;height:2px;background:#76b9ed"></div><svg class="tk" style="left:161px" width="26" height="26" viewBox="0 0 26 26"><circle cx="12" cy="12" r="11" fill="#db4437"/><path d="M12 12 L2.5 17.5 A11 11 0 0 0 17 21.8Z" fill="#0f9d58"/><path d="M12 12 L23 12 A11 11 0 0 1 17 21.8Z" fill="#f4b400"/><circle cx="12" cy="12" r="5" fill="#fff"/><circle cx="12" cy="12" r="3.8" fill="#4285f4"/><circle cx="18" cy="18" r="6.5" fill="#e8e8e8"/><rect x="13" y="17" width="10" height="2" fill="#c04040"/><rect x="14" y="20" width="8" height="1.5" fill="#80a0c0"/></svg><div class="a" style="left:152px;top:898px;width:40px;height:2px;background:#76b9ed"></div><svg class="tk" style="left:209px" width="24" height="24" viewBox="0 0 24 24"><defs><linearGradient id="ffx" x1="0.8" y1="0" x2="0.3" y2="1"><stop offset="0" stop-color="#ffd43a"/><stop offset="0.45" stop-color="#ff8a2a"/><stop offset="1" stop-color="#f0307a"/></linearGradient></defs><path d="M12 23 C6 23 1.5 18.5 1.5 13 C1.5 9.5 3 6.5 5 5 C5 7 5.5 8 6.5 8.5 C7.5 5 10.5 3 13.5 2.5 C13.5 4 14.5 1.5 15.5 0.5 C16 2.5 18 3.5 19.5 5 C21.5 7 22.5 10 22.5 13 C22.5 18.5 18 23 12 23Z" fill="url(#ffx)"/><circle cx="12.5" cy="13" r="5.5" fill="#7a3ae0"/><path d="M4 11 C6 9.5 9 9 11 10.5 C8.5 11 7.5 12.5 8 14.5 C6 14 4.5 12.5 4 11Z" fill="#ff9a30"/></svg><div class="a" style="left:201px;top:898px;width:40px;height:2px;background:#76b9ed"></div><svg class="tk" style="left:258px" width="24" height="24" viewBox="0 0 24 24"><circle cx="12" cy="12" r="11" fill="#1d8fd8"/><path d="M1 12 C1 5 7 1 12 1 C18 1 23 5 23 11 C23 15 20 16 17 16 C13 16 12 14 14 12 C14 8 10 6 7 7 C3 8 1 11 1 12Z" fill="#3cc26a"/><path d="M1 12 C1 5 7 1 12 1 C17 1 20 3 22 6 C18 3 10 3 7 7 C3 8 1 11 1 12Z" fill="#2fb9e8"/><path d="M8 13 C8 18 12 22 17 21.5 C10 24 2 20 1.5 13Z" fill="#0c5fa8"/></svg><svg class="tk" style="left:307px" width="24" height="24" viewBox="0 0 24 24"><rect x="0" y="4" width="24" height="16" rx="4" fill="#f00"/><path d="M9.5 8 L16 12 L9.5 16Z" fill="#fff"/></svg><svg class="tk" style="left:356px" width="24" height="24" viewBox="0 0 24 24"><defs><linearGradient id="ig" x1="0" y1="1" x2="1" y2="0"><stop offset="0" stop-color="#fdb24a"/><stop offset="0.45" stop-color="#e8304a"/><stop offset="1" stop-color="#8a3ab9"/></linearGradient></defs><rect width="24" height="24" rx="6" fill="url(#ig)"/><rect x="5" y="5" width="14" height="14" rx="4" fill="none" stroke="#fff" stroke-width="1.8"/><circle cx="12" cy="12" r="3.3" fill="none" stroke="#fff" stroke-width="1.8"/><circle cx="16.3" cy="7.7" r="1" fill="#fff"/></svg><svg class="tk" style="left:405px" width="24" height="24" viewBox="0 0 24 24"><path d="M12 1 C18 1 23 6 23 12 C23 18 18 23 12 23 C10 23 8.2 22.4 6.6 21.5 L1.5 22.8 L2.9 18 C1.7 16.2 1 14.2 1 12 C1 6 6 1 12 1Z" fill="#fff"/><path d="M12 3 C17 3 21 7 21 12 C21 17 17 21 12 21 C10.2 21 8.6 20.4 7.2 19.6 L4.2 20.4 L5 17.6 C3.8 16 3 14 3 12 C3 7 7 3 12 3Z" fill="#25d366"/><path d="M8.5 7 C9 6.5 9.8 6.8 10 7.5 L10.6 9 C10.7 9.5 10.2 10 9.9 10.4 C10.7 12 12 13.3 13.6 14.1 C14 13.8 14.5 13.3 15 13.4 L16.5 14 C17.2 14.2 17.4 15 17 15.5 C16 17 14.5 17 12.5 16 C10 14.8 8 12.5 7.3 10.2 C7 8.8 7.6 7.7 8.5 7Z" fill="#fff"/></svg><svg class="tk" style="left:454px" width="24" height="24" viewBox="0 0 24 24"><rect width="24" height="24" fill="#1da1f2"/><path d="M19 8 C18.5 8.3 18 8.4 17.5 8.5 C18 8.2 18.4 7.7 18.6 7.1 C18.1 7.4 17.5 7.6 17 7.7 C16 6.6 14.3 6.6 13.3 7.6 C12.7 8.2 12.4 9.1 12.6 10 C10.6 9.9 8.7 8.9 7.4 7.4 C6.8 8.6 7.1 10 8.2 10.8 C7.8 10.8 7.4 10.7 7.1 10.5 C7.1 11.8 8 12.9 9.2 13.1 C8.8 13.2 8.4 13.3 8 13.2 C8.3 14.3 9.4 15 10.5 15 C9.4 15.9 8 16.3 6.5 16.1 C12.5 19.5 19 15.5 18.5 9 C19 8.7 19 8.4 19 8Z" fill="#fff"/></svg><svg class="tk" style="left:503px" width="24" height="24" viewBox="0 0 24 24"><rect x="0" y="1" width="24" height="23" fill="#1a50d0"/><path d="M3 5 H10 M3 8 H9 M5 11 L9 5" stroke="#fff" stroke-width="1.3"/><rect x="13" y="4" width="8" height="6" fill="#fff"/><rect x="15" y="2" width="4" height="3" fill="#fff"/><path d="M5 13 V22 M3 13 V16 H7 V13" stroke="#fff" stroke-width="1.5" fill="none"/><path d="M10 13 V22" stroke="#fff" stroke-width="1.6"/><path d="M17 12 L18.6 16 L22.5 16 L19.4 18.4 L20.6 22.5 L17 20 L13.4 22.5 L14.6 18.4 L11.5 16 L15.4 16Z" fill="#fff"/></svg><svg class="tk" style="left:555px" width="18" height="24" viewBox="0 0 18 24"><rect x="0" y="1" width="18" height="23" rx="1.5" fill="#6e7a82"/><rect x="2" y="3" width="14" height="4" fill="#8ed0f0"/><g fill="#e0e4e8"><rect x="2" y="9" width="4" height="3"/><rect x="7" y="9" width="4" height="3"/><rect x="12" y="9" width="4" height="3"/><rect x="2" y="14" width="4" height="3"/><rect x="7" y="14" width="4" height="3"/><rect x="2" y="19" width="4" height="3"/><rect x="7" y="19" width="4" height="3"/></g><rect x="12" y="14" width="4" height="8" fill="#1a60b0"/></svg><svg class="tk" style="left:601px" width="24" height="24" viewBox="0 0 24 24"><rect x="0" y="2" width="23" height="21" fill="#2b8ee0"/><rect x="0" y="2" width="23" height="5" fill="#1f78c8"/><rect x="5" y="0" width="2" height="5" fill="#2b8ee0"/><rect x="16" y="0" width="2" height="5" fill="#2b8ee0"/><g fill="#fff"><rect x="4" y="10" width="2" height="2"/><rect x="8" y="10" width="2" height="2"/><rect x="12" y="10" width="2" height="2"/><rect x="16" y="10" width="2" height="2"/><rect x="4" y="14" width="2" height="2"/><rect x="8" y="14" width="2" height="2"/><rect x="12" y="14" width="2" height="2"/><rect x="16" y="14" width="2" height="2"/><rect x="4" y="18" width="2" height="2"/><rect x="8" y="18" width="2" height="2"/><rect x="12" y="18" width="2" height="2"/></g></svg><div class="a" style="left:651px;top:869px;width:22px;height:22px;border:1.5px solid #c86bf0;border-radius:2px;background:#2a0038"></div><div class="t" style="left:651px;width:22px;top:873px;text-align:center;font-size:12px;color:#e38dff">Pr</div><div class="a" style="left:700px;top:869px;width:22px;height:22px;border:1.5px solid #9a66e8;border-radius:2px;background:#1a0a3a"></div><div class="t" style="left:700px;width:22px;top:873px;text-align:center;font-size:12px;color:#d8a0ff">Ae</div><div class="a" style="left:749px;top:869px;width:22px;height:22px;border:1.5px solid #31c5f0;border-radius:2px;background:#001e36"></div><div class="t" style="left:749px;width:22px;top:873px;text-align:center;font-size:12px;color:#31c5f0">Ps</div><div class="a" style="left:785px;top:860px;width:48px;height:40px;background:#3c4f5c"></div><div class="a" style="left:785px;top:898px;width:48px;height:2px;background:#76b9ed"></div><svg class="tk" style="left:797px" width="24" height="24" viewBox="0 0 24 24"><circle cx="12" cy="12" r="11.5" fill="#4a8cff"/><rect x="5" y="8" width="9.5" height="8" rx="1.6" fill="#fff"/><path d="M15 10.5 L19 8.2 V15.8 L15 13.5Z" fill="#fff"/></svg><svg class="tk" style="left:847px" width="23" height="23" viewBox="0 0 23 23"><path d="M0 0 H23 V14 L14 23 H0Z" fill="#fcd116"/><path d="M23 14 L14 23 V14Z" fill="#6a5a10"/></svg><svg class="tk" style="left:895px" width="24" height="24" viewBox="0 0 24 24"><path d="M0 4 C0 2 2 0 4 0 H24 V20 C24 22 22 24 20 24 H4 C2 24 0 22 0 20Z" fill="#4ac42a"/><path d="M6 9 L9 6 L19 16 L18 19 L15 18Z" fill="#fff"/></svg><div class="a" style="left:887px;top:898px;width:40px;height:2px;background:#76b9ed"></div><svg class="a" style="left:1415px;top:875px" width="14" height="9" viewBox="0 0 14 9"><path d="M1 8 L7 2 L13 8" fill="none" stroke="#fff" stroke-width="1.4"/></svg><svg class="a" style="left:1437px;top:871px" width="18" height="19" viewBox="0 0 18 19"><rect x="4" y="3.5" width="13" height="9" fill="none" stroke="#fff" stroke-width="1.2"/><path d="M10 12.5 V15.5 M6 16 H14" stroke="#fff" stroke-width="1.2"/><rect x="0.6" y="0.6" width="4.5" height="4.5" fill="#1a2c40" stroke="#fff" stroke-width="1"/><path d="M2.8 5 V17 H4" stroke="#fff" stroke-width="1" fill="none"/></svg><svg class="a" style="left:1461px;top:871px" width="18" height="18" viewBox="0 0 18 18"><path d="M1.5 6.5 H4.5 L8.5 3 V15 L4.5 11.5 H1.5Z" fill="none" stroke="#fff" stroke-width="1.2"/><path d="M11 6.5 C12 8 12 10 11 11.5 M13.2 4.8 C15 7 15 11 13.2 13.2" fill="none" stroke="#fff" stroke-width="1.2"/><path d="M15.5 3 C18 6 18 12 15.5 15" fill="none" stroke="#8a94a0" stroke-width="1"/></svg><div class="t" style="left:1488px;width:54px;top:865px;text-align:center;font-size:12px;color:#fff">13:14</div><div class="t" style="left:1486px;width:58px;top:883px;text-align:center;font-size:12px;color:#fff">28-Sep-22</div><svg class="a" style="left:1558px;top:869px" width="26" height="26" viewBox="0 0 26 26"><path d="M1 1 H17 V13 H7 L3.5 16.5 V13 H1Z" fill="#fff"/><path d="M4 4 H14 M4 7 H14 M4 10 H11" stroke="#1a2c40" stroke-width="1"/><circle cx="16.5" cy="17.5" r="7.5" fill="#3a3f48" stroke="#1a2c40" stroke-width="1.2"/></svg><div class="t" style="left:1569px;width:12px;top:881px;text-align:center;font-size:12px;font-weight:bold;color:#fff">2</div><div class="a" style="left:1596px;top:860px;width:1px;height:40px;background:#5a6a7a"></div></body></html>
